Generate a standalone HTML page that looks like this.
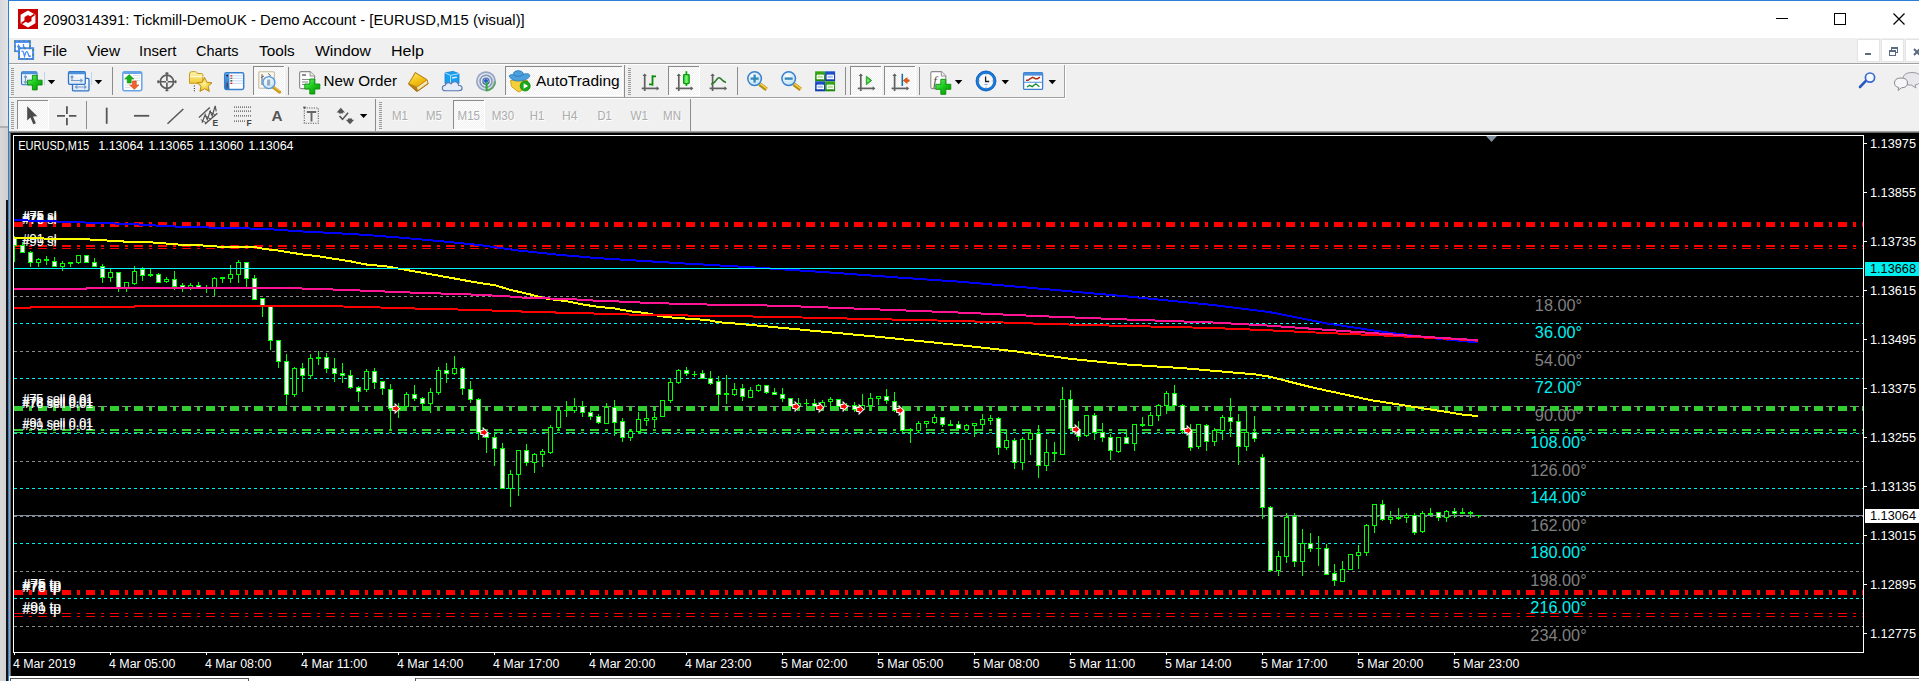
<!DOCTYPE html><html><head><meta charset="utf-8"><title>EURUSD,M15</title><style>
html,body{margin:0;padding:0}
body{width:1919px;height:681px;overflow:hidden;position:relative;background:#fff;font-family:"Liberation Sans",sans-serif;}
.abs{position:absolute}
.t{position:absolute;white-space:pre;line-height:1;transform-origin:0 0}
.menu{font-size:15px;color:#000;top:43px}
.tf{font-size:12px;color:#a0a0a0;top:110px;text-shadow:1px 1px 0 #fff}
.sep{position:absolute;width:1px;background:#a0a0a0;box-shadow:1px 0 0 #fff}
.grip{position:absolute;width:3px;background:repeating-linear-gradient(#a0a0a0 0 1px,transparent 1px 3px)}
.pressed{position:absolute;box-sizing:border-box;border:1px solid #a0a0a0;border-right-color:#fff;border-bottom-color:#fff;background:
 repeating-conic-gradient(#fff 0 25%,#f0f0f0 0 50%) 0 0/2px 2px}
svg{position:absolute;overflow:visible}
</style></head><body>
<div class="abs" style="left:0;top:0;width:8px;height:681px;background:linear-gradient(90deg,#d6d8db,#e4e4e6)"></div>
<div class="abs" style="left:0;top:127px;width:8px;height:554px;background:linear-gradient(90deg,#d8d8d8,#cfcfcf)"></div>
<div class="abs" style="left:0;top:126px;width:8px;height:2px;background:#b0b0b0"></div>
<div class="abs" style="left:6px;top:200px;width:2px;height:481px;background:#10141c"></div>
<div class="abs" style="left:8px;top:0;width:1px;height:681px;background:#2b80d6"></div>
<div class="abs" style="left:8px;top:0;width:1911px;height:1px;background:#2b80d6"></div>
<div class="abs" style="left:9px;top:1px;width:1910px;height:37px;background:#fff"></div>
<div class="abs" style="left:9px;top:38px;width:1910px;height:94px;background:#f0f0f0"></div>
<div class="abs" style="left:9px;top:63px;width:1910px;height:1px;background:#a0a0a0"></div>
<div class="abs" style="left:9px;top:64px;width:1910px;height:1px;background:#fff"></div>
<div class="abs" style="left:9px;top:97px;width:1056px;height:1px;background:#a0a0a0"></div>
<div class="abs" style="left:9px;top:98px;width:1057px;height:1px;background:#fff"></div>
<div class="abs" style="left:1064px;top:65px;width:1px;height:33px;background:#a0a0a0"></div>
<div class="abs" style="left:1065px;top:65px;width:1px;height:33px;background:#fff"></div>
<svg style="left:18px;top:9px" width="20" height="20" viewBox="0 0 20 20"><rect width="20" height="20" fill="#c80000"/><polygon points="10,1.5 17.4,5.8 17.4,14.2 10,18.5 2.6,14.2 2.6,5.8" fill="#fff"/><polygon points="10,6 13.5,8 13.5,12 10,14 6.5,12 6.5,8" fill="#c80000"/><path d="M3.5 14.5 L8 11.5 M12 8.5 L16.5 5.5" stroke="#c80000" stroke-width="1.6"/></svg>
<div class="t" id="title" style="left:43px;top:12px;font-size:15px;color:#000;transform:scaleX(0.986)">2090314391: Tickmill-DemoUK - Demo Account - [EURUSD,M15 (visual)]</div>
<svg style="left:1770px;top:8px" width="149" height="24" viewBox="1770 8 149 24" shape-rendering="crispEdges"><rect x="1776" y="18" width="12" height="1" fill="#000"/><rect x="1834.5" y="13.5" width="11" height="11" fill="none" stroke="#000"/><path d="M1893.5 13.5 L1904.5 24.5 M1904.5 13.5 L1893.5 24.5" stroke="#000" stroke-width="1.2" shape-rendering="auto"/></svg>
<div class="t menu" style="left:42.6px;transform:scaleX(1.0012)">File</div>
<div class="t menu" style="left:86.6px;transform:scaleX(1.0233)">View</div>
<div class="t menu" style="left:139.3px;transform:scaleX(0.9941)">Insert</div>
<div class="t menu" style="left:196px;transform:scaleX(0.9640)">Charts</div>
<div class="t menu" style="left:258.6px;transform:scaleX(1.0220)">Tools</div>
<div class="t menu" style="left:314.8px;transform:scaleX(1.0495)">Window</div>
<div class="t menu" style="left:390.5px;transform:scaleX(1.0693)">Help</div>
<svg style="left:0;top:0" width="60" height="64" viewBox="0 0 60 64"><rect x="15" y="41.2" width="15" height="10" fill="#fff" stroke="#4a8aff" stroke-width="1.8"/><rect x="14.1" y="40.3" width="16.8" height="2.6" fill="#4a8aff"/><path d="M14.1 41.2 H31 M30 41 V52 M15 41 V52" stroke="#4e8a78" stroke-width="1.8" stroke-dasharray="1.6 3" fill="none"/><path d="M18.500 44.500 v4 M17 46.500 h3 M23.500 44 v4 l1.500 -1" stroke="#4a8aff" stroke-width="1.300" fill="none"/><rect x="19" y="48.200" width="14.100" height="10.800" fill="#fff" stroke="#4a8aff" stroke-width="2"/><path d="M19 48.200 H33.100 V59 H19 Z" stroke="#4e8a78" stroke-width="2" stroke-dasharray="1.600 3.400" fill="none"/><path d="M21.500 51.500 q1.500 -1 2 1 l1 4 l1.200 -4 q1 -2 2 0 l1.200 4.200" stroke="#4a8aff" stroke-width="1.200" fill="none"/><rect x="29" y="55.300" width="1.800" height="1.800" fill="#4a8aff"/></svg>
<div class="abs" style="left:1857px;top:39px;width:23px;height:23px;background:#fff;border:1px solid #e4e4e4;box-sizing:border-box"></div>
<div class="abs" style="left:1881px;top:39px;width:23px;height:23px;background:#fff;border:1px solid #e4e4e4;box-sizing:border-box"></div>
<div class="abs" style="left:1905px;top:39px;width:23px;height:23px;background:#fff;border:1px solid #e4e4e4;box-sizing:border-box"></div>
<div class="abs" style="left:1865px;top:53px;width:6px;height:2px;background:#5a6a80"></div>
<svg style="left:1888.5px;top:46.5px" width="10" height="10" viewBox="0 0 10 10" shape-rendering="crispEdges"><rect x="2.5" y="0.5" width="6" height="5" fill="none" stroke="#5a6a80"/><rect x="2" y="0" width="7" height="2" fill="#5a6a80"/><rect x="0.5" y="3.5" width="6" height="5" fill="#fff" stroke="#5a6a80"/><rect x="0" y="3" width="7" height="2" fill="#5a6a80"/></svg>
<svg style="left:1912.5px;top:47.5px" width="8" height="8" viewBox="0 0 8 8"><path d="M1 1 L7 7 M7 1 L1 7" stroke="#5a6a80" stroke-width="2"/></svg>
<svg style="left:0;top:0" width="1919" height="133" viewBox="0 0 1919 133" font-family="Liberation Sans, sans-serif">
<defs>
<pattern id="dith" width="2" height="2" patternUnits="userSpaceOnUse"><rect width="2" height="2" fill="#f0f0f0"/><rect width="1" height="1" fill="#fff"/><rect x="1" y="1" width="1" height="1" fill="#fff"/></pattern>
<linearGradient id="gplus" x1="0" y1="0" x2="1" y2="1"><stop offset="0" stop-color="#7cf07c"/><stop offset="0.5" stop-color="#18c818"/><stop offset="1" stop-color="#0a8a0a"/></linearGradient>
<linearGradient id="gwin" x1="0" y1="0" x2="0" y2="1"><stop offset="0" stop-color="#ffffff"/><stop offset="1" stop-color="#dce8f8"/></linearGradient>
<linearGradient id="ggold" x1="0" y1="0" x2="1" y2="1"><stop offset="0" stop-color="#ffe060"/><stop offset="0.5" stop-color="#e8b010"/><stop offset="1" stop-color="#a86c08"/></linearGradient>
<linearGradient id="gfold" x1="0" y1="0" x2="0" y2="1"><stop offset="0" stop-color="#fff6b0"/><stop offset="1" stop-color="#f0c830"/></linearGradient>
<radialGradient id="glens" cx="0.4" cy="0.35" r="0.7"><stop offset="0" stop-color="#ffffff"/><stop offset="1" stop-color="#b8e0f4"/></radialGradient>
<linearGradient id="gblue" x1="0" y1="0" x2="0" y2="1"><stop offset="0" stop-color="#58a0e8"/><stop offset="1" stop-color="#2a6cc0"/></linearGradient>
<linearGradient id="ggr" x1="0" y1="0" x2="0" y2="1"><stop offset="0" stop-color="#38a818"/><stop offset="1" stop-color="#1c8808"/></linearGradient>
<linearGradient id="gbl" x1="0" y1="0" x2="0" y2="1"><stop offset="0" stop-color="#2050d0"/><stop offset="1" stop-color="#1038a8"/></linearGradient>
<linearGradient id="gcandle" x1="0" y1="0" x2="1" y2="0"><stop offset="0" stop-color="#20c820"/><stop offset="0.5" stop-color="#80f880"/><stop offset="1" stop-color="#20c820"/></linearGradient>
<radialGradient id="gstar" cx="0.45" cy="0.45" r="0.6"><stop offset="0" stop-color="#fff4a0"/><stop offset="0.6" stop-color="#f4d040"/><stop offset="1" stop-color="#d8a010"/></radialGradient>
<linearGradient id="ggold2" x1="0.2" y1="0" x2="0.8" y2="1"><stop offset="0" stop-color="#ffe870"/><stop offset="0.5" stop-color="#f4c418"/><stop offset="1" stop-color="#e0a008"/></linearGradient>
<radialGradient id="gsig" cx="0.45" cy="0.45" r="0.6"><stop offset="0" stop-color="#ffffff" stop-opacity="0.1"/><stop offset="0.7" stop-color="#a0b0c8" stop-opacity="0.35"/><stop offset="1" stop-color="#7088a8" stop-opacity="0.55"/></radialGradient>
</defs>
<rect x="11" y="68" width="3" height="1" fill="#9a9a9a" shape-rendering="crispEdges"/>
<rect x="11" y="70" width="3" height="1" fill="#9a9a9a" shape-rendering="crispEdges"/>
<rect x="11" y="72" width="3" height="1" fill="#9a9a9a" shape-rendering="crispEdges"/>
<rect x="11" y="74" width="3" height="1" fill="#9a9a9a" shape-rendering="crispEdges"/>
<rect x="11" y="76" width="3" height="1" fill="#9a9a9a" shape-rendering="crispEdges"/>
<rect x="11" y="78" width="3" height="1" fill="#9a9a9a" shape-rendering="crispEdges"/>
<rect x="11" y="80" width="3" height="1" fill="#9a9a9a" shape-rendering="crispEdges"/>
<rect x="11" y="82" width="3" height="1" fill="#9a9a9a" shape-rendering="crispEdges"/>
<rect x="11" y="84" width="3" height="1" fill="#9a9a9a" shape-rendering="crispEdges"/>
<rect x="11" y="86" width="3" height="1" fill="#9a9a9a" shape-rendering="crispEdges"/>
<rect x="11" y="88" width="3" height="1" fill="#9a9a9a" shape-rendering="crispEdges"/>
<rect x="11" y="90" width="3" height="1" fill="#9a9a9a" shape-rendering="crispEdges"/>
<rect x="11" y="92" width="3" height="1" fill="#9a9a9a" shape-rendering="crispEdges"/>
<rect x="11" y="94" width="3" height="1" fill="#9a9a9a" shape-rendering="crispEdges"/>
<rect x="21.5" y="71.7" width="15.5" height="13" rx="1.2" fill="url(#gwin)" stroke="#2f74c8" stroke-width="1.1"/><rect x="21.5" y="71.7" width="15.5" height="2.6" rx="1" fill="#4a90dc"/>
<path d="M25.5 76 v7 M24 77.6 l1.5 -1.8 l1.5 1.8 M24 81.4 l1.5 1.8 l1.5 -1.8" stroke="#7a9cc0" stroke-width="1.2" fill="none"/>
<path d="M32.4 75.3 h4.8 v4.9 h4.9 v4.8 h-4.9 v4.9 h-4.8 v-4.9 h-4.9 v-4.8 h4.9 z" fill="url(#gplus)" stroke="#0a8c0a" stroke-width="0.9" stroke-linejoin="round"/>
<rect x="44" y="72" width="1" height="13" fill="#bcd4ee"/>
<polygon points="47.8,80 55.199999999999996,80 51.5,84.2" fill="#000"/>
<rect x="72.5" y="78.3" width="16.5" height="12.6" rx="1.2" fill="url(#gwin)" stroke="#2f74c8" stroke-width="1.3"/>
<path d="M75.5 87 h10.5 M77.3 85.5 l-1.8 1.5 l1.8 1.5 M84.2 85.5 l1.8 1.5 l-1.8 1.5" stroke="#7a9cc0" stroke-width="1.2" fill="none"/>
<rect x="68.5" y="71.7" width="16.8" height="12.6" rx="1.2" fill="url(#gwin)" stroke="#2f74c8" stroke-width="1.3"/><rect x="68.5" y="71.7" width="16.8" height="2.6" rx="1" fill="#4a90dc"/>
<path d="M72 76 v5 M70.6 77.5 l1.4 -1.6 l1.4 1.6 M71 80.5 h11 M80.4 79 l1.8 1.5 l-1.8 1.5" stroke="#7a9cc0" stroke-width="1.2" fill="none"/>
<rect x="91" y="72" width="1" height="13" fill="#bcd4ee"/>
<polygon points="94.7,80 102.10000000000001,80 98.4,84.2" fill="#000"/>
<rect x="112" y="67" width="1" height="28" fill="#8c8c8c" shape-rendering="crispEdges"/>
<rect x="122.8" y="71.8" width="19" height="19" rx="2" fill="#fff" stroke="#68a4e8" stroke-width="1.5"/><rect x="123" y="71.600" width="18.600" height="2.400" rx="1" fill="#68a4e8"/>
<path d="M133 75.5 h7 M133 78 h7 M125 85 h5 M125 87.5 h5 M134 80.5 h6" stroke="#dcdcdc" stroke-width="1"/>
<path d="M129.2 74.6 l4.6 4.4 h-2.6 v4 h-4 v-4 h-2.6 z" fill="#18b018" stroke="#0c900c" stroke-width="0.6"/>
<path d="M134.3 89.4 l-4.6 -4.4 h2.6 v-4 h4 v4 h2.6 z" fill="#f06030" stroke="#d84818" stroke-width="0.6"/>
<g stroke="#5c5c5c" fill="none"><circle cx="166.9" cy="81.8" r="6.6" stroke-width="1.7"/><path d="M166.9 72.6 V91 M157.5 81.8 H176.3" stroke-width="1.6"/><path d="M165.400 73.300 h3 M165.400 90.400 h3 M158.200 80.300 v3 M175.600 80.300 v3" stroke-width="1.500"/></g><circle cx="166.9" cy="81.8" r="1" fill="#f0f0f0"/>
<path d="M189.5 74 q0 -2.3 2.3 -2.3 h3.6 q1.6 0 2 1.8 h4.2 q1.2 0 1.2 1.2 v8.6 h-13.3 z" fill="url(#gfold)" stroke="#c89a20" stroke-width="1"/><path d="M190 76.5 h12.5" stroke="#fffbe0" stroke-width="1.2"/>
<path d="M194.4 85.5 v6" stroke="#303030" stroke-width="1.1" stroke-dasharray="1 1.4"/>
<polygon points="204.6,77.4 206.9,82.2 212,82.8 208.2,86.3 209.3,91.4 204.6,88.8 199.9,91.4 201,86.3 197.2,82.8 202.3,82.2" fill="url(#gstar)" stroke="#b8860c" stroke-width="0.9" stroke-linejoin="round"/>
<rect x="224.7" y="72.8" width="19" height="16.6" rx="1.6" fill="#fff" stroke="#3a80d0" stroke-width="1.5"/><rect x="225" y="73" width="4.4" height="16.2" fill="url(#gblue)"/>
<path d="M231 75.8 h12 M231 78.3 h12 M231 80.8 h12 M231 83.3 h12" stroke="#c4d8f8" stroke-width="1"/><rect x="230.3" y="75.2" width="2" height="1.3" fill="#f02020"/><rect x="230.3" y="77.7" width="2" height="1.3" fill="#508050"/><rect x="230.3" y="80.2" width="2" height="1.3" fill="#205020"/><rect x="230.3" y="82.7" width="2" height="1.3" fill="#f02020"/><circle cx="227.2" cy="75.6" r="0.9" fill="#101010"/><rect x="226.6" y="82.5" width="1.3" height="5" fill="#404858"/>
<g shape-rendering="crispEdges"><rect x="253" y="66" width="32" height="30" fill="url(#dith)"/><rect x="253" y="66" width="32" height="1" fill="#8a8a8a"/><rect x="253" y="66" width="1" height="30" fill="#8a8a8a"/><rect x="253" y="95" width="32" height="1" fill="#fff"/><rect x="284" y="66" width="1" height="30" fill="#fff"/></g>
<rect x="258.8" y="71.7" width="15.6" height="16.6" rx="1" fill="#faf8f0" stroke="#c4bc9c" stroke-width="1.1"/><path d="M262 74 v11 M261 77.5 l3 -1.5 M268 73.5 l2.5 2 l-2 1.5" stroke="#606060" stroke-width="1" fill="none"/>
<path d="M273 87 l6.6 5" stroke="#c89818" stroke-width="3.2" stroke-linecap="round"/><path d="M273.4 86.4 l6.4 4.8" stroke="#f0d050" stroke-width="1" stroke-linecap="round"/>
<circle cx="268.9" cy="82.6" r="6" fill="url(#glens)" fill-opacity="0.92" stroke="#5c98dc" stroke-width="1.4"/><rect x="267" y="79.5" width="3.2" height="6" fill="#8098b0" opacity="0.8"/>
<rect x="288" y="67" width="1" height="28" fill="#8c8c8c" shape-rendering="crispEdges"/>
<path d="M301.1 71.6 h9 l4.5 4.5 v11 q0 1.5 -1.5 1.5 h-12 q-1.5 0 -1.5 -1.5 v-14 q0 -1.5 1.5 -1.5 z" fill="#fdfdfd" stroke="#8a8a8a" stroke-width="1.1"/><path d="M310.1 71.6 v4.5 h4.5" fill="#e8e8e8" stroke="#8a8a8a" stroke-width="0.9"/>
<path d="M302 75 h4 " stroke="#707070" stroke-width="1.6"/><path d="M302 79.5 h9 M302 82 h6 M302 84.5 h6" stroke="#8a8a8a" stroke-width="1.1"/>
<path d="M309.8 79 h5 v5.0 h5.0 v5 h-5.0 v5.0 h-5 v-5.0 h-5.0 v-5 h5.0 z" fill="url(#gplus)" stroke="#0a8c0a" stroke-width="0.9" stroke-linejoin="round"/>
<text x="323.6" y="85.5" font-size="15" fill="#000" textLength="73.5" lengthAdjust="spacingAndGlyphs">New Order</text>
<path d="M408.400 84 l5 -8 l1.800 -3.500 l11.800 7.200 l1.200 4 l-10.400 7.400 q-.8 .4 -1.600 0 z" fill="#b87c10" stroke="#a06808" stroke-width="0.9" stroke-linejoin="round"/>
<path d="M417 87.200 l9.800 -7 l.9 3 l-9.900 7 z" fill="#f4e6b0"/>
<path d="M415.200 72.800 l11.600 7 l-9.800 7.200 l-8.200 -3.600 l4.800 -7.400 z" fill="url(#ggold2)" stroke="#c08a10" stroke-width="0.7" stroke-linejoin="round"/>
<path d="M445 72.8 l8 -1.4 l6 2.2 v10 h-14 z" fill="#18a0f0" stroke="#1080d8" stroke-width="0.8"/><path d="M445 72.8 l5.5 2.6 v9 M450.5 75.4 l8.5 -1.8" stroke="#bfe4ff" stroke-width="0.9" fill="none"/><rect x="452" y="77" width="5" height="1.4" fill="#d8f0ff" transform="rotate(-10 454 78)"/>
<path d="M445.5 90.8 q-3.2 0 -3.2 -2.8 q0 -2.6 3 -2.8 q.4 -2.6 3.2 -2.6 q1.6 0 2.6 1.2 q1.2 -2 3.6 -2 q3.4 0 3.8 3.4 q3.6 .2 3.6 2.9 q0 2.7 -3.2 2.7 z" fill="#e6ecf6" stroke="#5676b4" stroke-width="1.1"/>
<circle cx="486" cy="81.300" r="9.800" fill="url(#gsig)"/><g fill="none"><circle cx="486" cy="81.3" r="9.2" stroke="#8a9cc0" stroke-width="1.6" opacity="0.85"/><circle cx="486" cy="81.3" r="6" stroke="#7088b8" stroke-width="1.5" opacity="0.85"/><circle cx="486" cy="81.3" r="3.1" stroke="#5070b0" stroke-width="1.3"/><path d="M486 90.6 a9.2 9.2 0 0 0 9 -9" stroke="#50a050" stroke-width="2" opacity="0.8"/></g><circle cx="486" cy="81" r="2" fill="#2050d0"/><path d="M486.6 81.5 V91" stroke="#28b028" stroke-width="2"/>
<g shape-rendering="crispEdges"><rect x="505" y="66" width="118" height="30" fill="url(#dith)"/><rect x="505" y="66" width="118" height="1" fill="#8a8a8a"/><rect x="505" y="66" width="1" height="30" fill="#8a8a8a"/><rect x="505" y="95" width="118" height="1" fill="#fff"/><rect x="622" y="66" width="1" height="30" fill="#fff"/></g>
<path d="M510.5 80.5 l17 0 l-1 6.5 l-6.5 4.6 q-1 .5 -2 0 l-6.5 -5 z" fill="#f4d038" stroke="#c89a18" stroke-width="0.9"/>
<path d="M509.4 77 q-.6 -2.6 3.4 -2.4 q1 -4 5.4 -4 q4 0 5.6 3.4 q5.8 -1.2 6 1.6 q-.2 3.4 -8.4 5.2 q-8 1.4 -12 -3.8 z" fill="#4aa0dc" stroke="#2c78b8" stroke-width="0.8"/><path d="M513.5 75 q4.5 2.8 10.5 -.6" stroke="#2c78b8" stroke-width="0.9" fill="none"/>
<circle cx="525.2" cy="86" r="5" fill="#18a818" stroke="#0c8a0c" stroke-width="0.8"/><polygon points="523.6,83.2 523.6,88.8 528.2,86" fill="#fff"/>
<text x="536" y="85.5" font-size="15" fill="#000" textLength="83.6" lengthAdjust="spacingAndGlyphs">AutoTrading</text>
<rect x="624" y="65" width="1" height="32" fill="#8c8c8c" shape-rendering="crispEdges"/>
<rect x="628" y="68" width="3" height="1" fill="#9a9a9a" shape-rendering="crispEdges"/>
<rect x="628" y="70" width="3" height="1" fill="#9a9a9a" shape-rendering="crispEdges"/>
<rect x="628" y="72" width="3" height="1" fill="#9a9a9a" shape-rendering="crispEdges"/>
<rect x="628" y="74" width="3" height="1" fill="#9a9a9a" shape-rendering="crispEdges"/>
<rect x="628" y="76" width="3" height="1" fill="#9a9a9a" shape-rendering="crispEdges"/>
<rect x="628" y="78" width="3" height="1" fill="#9a9a9a" shape-rendering="crispEdges"/>
<rect x="628" y="80" width="3" height="1" fill="#9a9a9a" shape-rendering="crispEdges"/>
<rect x="628" y="82" width="3" height="1" fill="#9a9a9a" shape-rendering="crispEdges"/>
<rect x="628" y="84" width="3" height="1" fill="#9a9a9a" shape-rendering="crispEdges"/>
<rect x="628" y="86" width="3" height="1" fill="#9a9a9a" shape-rendering="crispEdges"/>
<rect x="628" y="88" width="3" height="1" fill="#9a9a9a" shape-rendering="crispEdges"/>
<rect x="628" y="90" width="3" height="1" fill="#9a9a9a" shape-rendering="crispEdges"/>
<rect x="628" y="92" width="3" height="1" fill="#9a9a9a" shape-rendering="crispEdges"/>
<rect x="628" y="94" width="3" height="1" fill="#9a9a9a" shape-rendering="crispEdges"/>
<g stroke="#606060" stroke-width="1.7" fill="#606060"><path d="M644.7 74.5 V91"/><path d="M641.7 88.4 H658.2"/><polygon points="642.5,76.1 646.9000000000001,76.1 644.7,73.5" stroke="none"/><polygon points="656.6,86.2 656.6,90.60000000000001 659.2,88.4" stroke="none"/></g>
<path d="M652.5 75.2 V85.8 M652.5 76.4 H656 M649 84.4 H652.5" stroke="#0a8c0a" stroke-width="1.8" fill="none"/>
<g shape-rendering="crispEdges"><rect x="668" y="66" width="32" height="30" fill="url(#dith)"/><rect x="668" y="66" width="32" height="1" fill="#8a8a8a"/><rect x="668" y="66" width="1" height="30" fill="#8a8a8a"/><rect x="668" y="95" width="32" height="1" fill="#fff"/><rect x="699" y="66" width="1" height="30" fill="#fff"/></g>
<g stroke="#606060" stroke-width="1.7" fill="#606060"><path d="M678.8 74.5 V91"/><path d="M675.8 88.4 H692.3"/><polygon points="676.5999999999999,76.1 681.0,76.1 678.8,73.5" stroke="none"/><polygon points="690.6999999999999,86.2 690.6999999999999,90.60000000000001 693.3,88.4" stroke="none"/></g>
<path d="M686.4 71.2 V86" stroke="#0a9a0a" stroke-width="1.7"/><rect x="683.6" y="74.6" width="5.6" height="9" rx="0.8" fill="url(#gcandle)" stroke="#0a9a0a" stroke-width="1.2"/>
<g stroke="#606060" stroke-width="1.7" fill="#606060"><path d="M712.6 74.5 V91"/><path d="M709.6 88.4 H726.1"/><polygon points="710.4,76.1 714.8000000000001,76.1 712.6,73.5" stroke="none"/><polygon points="724.5,86.2 724.5,90.60000000000001 727.1,88.4" stroke="none"/></g>
<path d="M711.2 84.4 q4 -2 6 -5.5 q1.6 -2.2 3.4 -.4 q2.6 3.2 5.4 4" stroke="#2a7a2a" stroke-width="1.6" fill="none"/>
<rect x="737" y="67" width="1" height="28" fill="#8c8c8c" shape-rendering="crispEdges"/>
<path d="M759.6 84.19999999999999 l7 5.2" stroke="#b88a10" stroke-width="4" stroke-linecap="butt"/><path d="M760.0 83.6 l7 5.2" stroke="#f0d048" stroke-width="1.6"/>
<circle cx="754.6" cy="78.6" r="6.8" fill="url(#glens)" stroke="#3a80cc" stroke-width="1.5"/>
<path d="M750.6 78.6 h8" stroke="#3a88b8" stroke-width="2.4"/>
<path d="M754.6 74.6 v8" stroke="#3a88b8" stroke-width="2.4"/>
<path d="M793.7 84.19999999999999 l7 5.2" stroke="#b88a10" stroke-width="4" stroke-linecap="butt"/><path d="M794.1 83.6 l7 5.2" stroke="#f0d048" stroke-width="1.6"/>
<circle cx="788.7" cy="78.6" r="6.8" fill="url(#glens)" stroke="#3a80cc" stroke-width="1.5"/>
<path d="M784.7 78.6 h8" stroke="#3a88b8" stroke-width="2.4"/>
<rect x="815.1" y="71.3" width="10" height="10" fill="url(#ggr)"/><path d="M817.1 79.3 v-4.2 h6.4 v4.2 M817.1 78.3 h6.4" fill="#fff" stroke="#fff" stroke-width="1"/><rect x="817.7" y="75.7" width="5.2" height="2.2" fill="#b8e0a0"/>
<rect x="825.1" y="71.3" width="10" height="10" fill="url(#gbl)"/><path d="M827.1 79.3 v-4.2 h6.4 v4.2 M827.1 78.3 h6.4" fill="#fff" stroke="#fff" stroke-width="1"/><rect x="827.7" y="75.7" width="5.2" height="2.2" fill="#a8c0f0"/>
<rect x="815.1" y="81.3" width="10" height="10" fill="url(#gbl)"/><path d="M817.1 89.3 v-4.2 h6.4 v4.2 M817.1 88.3 h6.4" fill="#fff" stroke="#fff" stroke-width="1"/><rect x="817.7" y="85.7" width="5.2" height="2.2" fill="#a8c0f0"/>
<rect x="825.1" y="81.3" width="10" height="10" fill="url(#ggr)"/><path d="M827.1 89.3 v-4.2 h6.4 v4.2 M827.1 88.3 h6.4" fill="#fff" stroke="#fff" stroke-width="1"/><rect x="827.7" y="85.7" width="5.2" height="2.2" fill="#b8e0a0"/>
<rect x="845" y="67" width="1" height="28" fill="#8c8c8c" shape-rendering="crispEdges"/>
<g shape-rendering="crispEdges"><rect x="850" y="66" width="32" height="30" fill="url(#dith)"/><rect x="850" y="66" width="32" height="1" fill="#8a8a8a"/><rect x="850" y="66" width="1" height="30" fill="#8a8a8a"/><rect x="850" y="95" width="32" height="1" fill="#fff"/><rect x="881" y="66" width="1" height="30" fill="#fff"/></g>
<g stroke="#606060" stroke-width="1.7" fill="#606060"><path d="M860.8 74.5 V91"/><path d="M857.8 88.4 H874.3"/><polygon points="858.5999999999999,76.1 863.0,76.1 860.8,73.5" stroke="none"/><polygon points="872.6999999999999,86.2 872.6999999999999,90.60000000000001 875.3,88.4" stroke="none"/></g>
<polygon points="866.3,76.2 866.3,84.8 871.8,80.5" fill="#30b830" stroke="#18a018" stroke-width="0.8"/><polygon points="867.4,78.6 867.4,82.4 869.8,80.5" fill="#90e890"/>
<g shape-rendering="crispEdges"><rect x="884" y="66" width="32" height="30" fill="url(#dith)"/><rect x="884" y="66" width="32" height="1" fill="#8a8a8a"/><rect x="884" y="66" width="1" height="30" fill="#8a8a8a"/><rect x="884" y="95" width="32" height="1" fill="#fff"/><rect x="915" y="66" width="1" height="30" fill="#fff"/></g>
<g stroke="#606060" stroke-width="1.7" fill="#606060"><path d="M894.6 74.5 V91"/><path d="M891.6 88.4 H908.1"/><polygon points="892.4,76.1 896.8000000000001,76.1 894.6,73.5" stroke="none"/><polygon points="906.5,86.2 906.5,90.60000000000001 909.1,88.4" stroke="none"/></g>
<path d="M902.3 73.8 V86" stroke="#1a70a8" stroke-width="1.6"/><path d="M903.2 80.6 l4 -3 v2.2 h2 v1.6 h-2 v2.2 z" fill="#e85810" stroke="#c04000" stroke-width="0.5"/>
<rect x="919" y="67" width="1" height="28" fill="#8c8c8c" shape-rendering="crispEdges"/>
<path d="M932.3 71.6 h9 l4.5 4.5 v11 q0 1.5 -1.5 1.5 h-12 q-1.5 0 -1.5 -1.5 v-14 q0 -1.5 1.5 -1.5 z" fill="#fdfdfd" stroke="#8a8a8a" stroke-width="1.1"/><path d="M941.3 71.6 v4.5 h4.5" fill="#e8e8e8" stroke="#8a8a8a" stroke-width="0.9"/>
<text x="933.2" y="85" font-size="13" font-style="italic" font-family="Liberation Serif, serif" fill="#505040">f</text>
<path d="M940.8 79.3 h5 v5.0 h5.0 v5 h-5.0 v5.0 h-5 v-5.0 h-5.0 v-5 h5.0 z" fill="url(#gplus)" stroke="#0a8c0a" stroke-width="0.9" stroke-linejoin="round"/>
<polygon points="954.9,80 962.3,80 958.6,84.2" fill="#000"/>
<circle cx="986" cy="81" r="8.7" fill="#f8f8f8" stroke="#1a78d8" stroke-width="2.9"/><circle cx="986" cy="81" r="10" fill="none" stroke="#0c58b0" stroke-width="0.7"/><path d="M985.6 76.5 v5 h3.6" stroke="#202020" stroke-width="1.3" fill="none"/><path d="M986 74.2 v1 M986 86.8 v1 M979.2 81 h1 M991.8 81 h1" stroke="#909090" stroke-width="0.9"/><path d="M984.5 84.5 h3" stroke="#58a0f0" stroke-width="0.9"/>
<polygon points="1001.6,80 1009.0,80 1005.3000000000001,84.2" fill="#000"/>
<rect x="1023.6" y="72.6" width="19" height="16.8" rx="1" fill="#fff" stroke="#3a80d0" stroke-width="1.3"/><rect x="1023.6" y="72.6" width="19" height="3" fill="#4a90dc"/><path d="M1024 82.3 h18.4" stroke="#6aa0e0" stroke-width="1.2"/>
<path d="M1026 80.3 l2 0 l2.4 -1.6 l2.4 -1.4 l2.6 1.4 l2.2 0 l2.4 -1.6" stroke="#b02810" stroke-width="1.4" fill="none"/><path d="M1027 87 l2.6 -1.6 l2.6 1.2 l3.6 -2.8 l3.6 3" stroke="#189030" stroke-width="1.4" fill="none"/>
<polygon points="1048.6,80 1056.0,80 1052.3,84.2" fill="#000"/>
<path d="M1860 87 l5.6 -5.8" stroke="#2858c0" stroke-width="2.6" stroke-linecap="round"/><circle cx="1870" cy="77.6" r="4.6" fill="#f4f8ff" stroke="#3868d0" stroke-width="1.7"/>
<path d="M1903 79 q0 -6.5 9 -6.5 q9 0 9 6.5 q0 5 -6 6 l1 3 l-4.5 -2.8 q-8.500 0 -8.500 -6.200 z" fill="#e8e8ec" stroke="#9a9aa0" stroke-width="1"/><path d="M1894.500 83 q0 -5 6.500 -5 q6.500 0 6.500 5 q0 4.600 -6 4.800 l-3.400 2.600 l.6 -2.900 q-4.200 -.9 -4.200 -4.500 z" fill="#f6f6f8" stroke="#8a8a90" stroke-width="1"/>
<rect x="11" y="102" width="3" height="1" fill="#9a9a9a" shape-rendering="crispEdges"/>
<rect x="11" y="104" width="3" height="1" fill="#9a9a9a" shape-rendering="crispEdges"/>
<rect x="11" y="106" width="3" height="1" fill="#9a9a9a" shape-rendering="crispEdges"/>
<rect x="11" y="108" width="3" height="1" fill="#9a9a9a" shape-rendering="crispEdges"/>
<rect x="11" y="110" width="3" height="1" fill="#9a9a9a" shape-rendering="crispEdges"/>
<rect x="11" y="112" width="3" height="1" fill="#9a9a9a" shape-rendering="crispEdges"/>
<rect x="11" y="114" width="3" height="1" fill="#9a9a9a" shape-rendering="crispEdges"/>
<rect x="11" y="116" width="3" height="1" fill="#9a9a9a" shape-rendering="crispEdges"/>
<rect x="11" y="118" width="3" height="1" fill="#9a9a9a" shape-rendering="crispEdges"/>
<rect x="11" y="120" width="3" height="1" fill="#9a9a9a" shape-rendering="crispEdges"/>
<rect x="11" y="122" width="3" height="1" fill="#9a9a9a" shape-rendering="crispEdges"/>
<rect x="11" y="124" width="3" height="1" fill="#9a9a9a" shape-rendering="crispEdges"/>
<rect x="11" y="126" width="3" height="1" fill="#9a9a9a" shape-rendering="crispEdges"/>
<rect x="11" y="128" width="3" height="1" fill="#9a9a9a" shape-rendering="crispEdges"/>
<g shape-rendering="crispEdges"><rect x="17" y="100" width="32" height="30" fill="url(#dith)"/><rect x="17" y="100" width="32" height="1" fill="#8a8a8a"/><rect x="17" y="100" width="1" height="30" fill="#8a8a8a"/><rect x="17" y="129" width="32" height="1" fill="#fff"/><rect x="48" y="100" width="1" height="30" fill="#fff"/></g>
<path d="M27.2 106.2 V120.4 L30.4 117.6 L33.3 124.3 L35.9 123.2 L33 116.6 L37.3 116.2 Z" fill="#4a4a4a"/>
<g stroke="#555" stroke-width="1.8"><path d="M57 115.9 H65 M69 115.9 H76.4 M66.9 106.3 V114 M66.9 118 V125.2"/></g>
<rect x="86" y="101" width="1" height="28" fill="#8c8c8c" shape-rendering="crispEdges"/>
<g stroke="#555" stroke-width="1.8" fill="none"><path d="M106.7 107.7 V123.8"/><path d="M134 115.8 H149.2"/><path d="M167.5 123.8 L183.3 109" stroke-width="1.5"/></g>
<g stroke="#555" fill="none"><path d="M199 117.400 L209.800 107.400 M205 124 L217.400 113.200" stroke-width="1.400"/><path d="M202 122.800 L205.200 114.600 L207.200 119.600 L210.200 111.200 L212.200 116 L215.200 105.800 L216.200 111.400" stroke-width="1.200"/><path d="M200.800 119.600 l5.400 3.200 M204.800 115.600 l6 3.600 M209.400 111.400 l5.400 3.200" stroke-width="1"/></g>
<text x="212.6" y="126.4" font-size="8.5" font-weight="bold" fill="#444">E</text>
<path d="M234 107.1 h17.2" stroke="#555" stroke-width="1.3" stroke-dasharray="1 1"/>
<path d="M234 111.1 h17.2" stroke="#555" stroke-width="1.3" stroke-dasharray="1 1"/>
<path d="M234 115.9 h17.2" stroke="#555" stroke-width="1.3" stroke-dasharray="1 1"/>
<path d="M234 121.2 h12" stroke="#555" stroke-width="1.3" stroke-dasharray="1 1"/>
<text x="246.6" y="126.4" font-size="8.5" font-weight="bold" fill="#444">F</text>
<text x="271.4" y="121.3" font-size="15" font-weight="bold" fill="#555" textLength="11" lengthAdjust="spacingAndGlyphs">A</text>
<rect x="304.3" y="108" width="14" height="15.300" fill="none" stroke="#555" stroke-width="1.1" stroke-dasharray="1.1 1.3"/><path d="M306.800 112 h9.400 M311.500 112 v9.500" stroke="#666" stroke-width="1.9"/><rect x="303.300" y="106.600" width="2.400" height="1.600" fill="#555"/>
<path d="M336.600 112.400 L340.800 107.800 L345 112.400 H342.800 V113.600 H338.800 V112.400 Z" fill="#555"/><path d="M345.800 119.800 L350 124.200 L354.200 119.800 H352 V118.600 H348 V119.800 Z" fill="#555"/><path d="M339.500 116 l3 3.400 l5.600 -6.600" stroke="#555" stroke-width="1.6" fill="none"/>
<polygon points="359.9,113.9 367.29999999999995,113.9 363.59999999999997,118.10000000000001" fill="#000"/>
<rect x="375" y="99" width="1" height="32" fill="#8c8c8c" shape-rendering="crispEdges"/>
<rect x="379" y="102" width="3" height="1" fill="#9a9a9a" shape-rendering="crispEdges"/>
<rect x="379" y="104" width="3" height="1" fill="#9a9a9a" shape-rendering="crispEdges"/>
<rect x="379" y="106" width="3" height="1" fill="#9a9a9a" shape-rendering="crispEdges"/>
<rect x="379" y="108" width="3" height="1" fill="#9a9a9a" shape-rendering="crispEdges"/>
<rect x="379" y="110" width="3" height="1" fill="#9a9a9a" shape-rendering="crispEdges"/>
<rect x="379" y="112" width="3" height="1" fill="#9a9a9a" shape-rendering="crispEdges"/>
<rect x="379" y="114" width="3" height="1" fill="#9a9a9a" shape-rendering="crispEdges"/>
<rect x="379" y="116" width="3" height="1" fill="#9a9a9a" shape-rendering="crispEdges"/>
<rect x="379" y="118" width="3" height="1" fill="#9a9a9a" shape-rendering="crispEdges"/>
<rect x="379" y="120" width="3" height="1" fill="#9a9a9a" shape-rendering="crispEdges"/>
<rect x="379" y="122" width="3" height="1" fill="#9a9a9a" shape-rendering="crispEdges"/>
<rect x="379" y="124" width="3" height="1" fill="#9a9a9a" shape-rendering="crispEdges"/>
<rect x="379" y="126" width="3" height="1" fill="#9a9a9a" shape-rendering="crispEdges"/>
<rect x="379" y="128" width="3" height="1" fill="#9a9a9a" shape-rendering="crispEdges"/>
<g shape-rendering="crispEdges"><rect x="453" y="100" width="32" height="30" fill="url(#dith)"/><rect x="453" y="100" width="32" height="1" fill="#8a8a8a"/><rect x="453" y="100" width="1" height="30" fill="#8a8a8a"/><rect x="453" y="129" width="32" height="1" fill="#fff"/><rect x="484" y="100" width="1" height="30" fill="#fff"/></g>
<text x="393" y="120.800" font-size="12" fill="#fff" textLength="16" lengthAdjust="spacingAndGlyphs">M1</text>
<text x="392" y="119.800" font-size="12" fill="#acacac" textLength="16" lengthAdjust="spacingAndGlyphs">M1</text>
<text x="427" y="120.800" font-size="12" fill="#fff" textLength="16" lengthAdjust="spacingAndGlyphs">M5</text>
<text x="426" y="119.800" font-size="12" fill="#acacac" textLength="16" lengthAdjust="spacingAndGlyphs">M5</text>
<text x="458.5" y="120.800" font-size="12" fill="#fff" textLength="22.5" lengthAdjust="spacingAndGlyphs">M15</text>
<text x="457.5" y="119.800" font-size="12" fill="#acacac" textLength="22.5" lengthAdjust="spacingAndGlyphs">M15</text>
<text x="492.7" y="120.800" font-size="12" fill="#fff" textLength="22.5" lengthAdjust="spacingAndGlyphs">M30</text>
<text x="491.7" y="119.800" font-size="12" fill="#acacac" textLength="22.5" lengthAdjust="spacingAndGlyphs">M30</text>
<text x="530.7" y="120.800" font-size="12" fill="#fff" textLength="14.5" lengthAdjust="spacingAndGlyphs">H1</text>
<text x="529.7" y="119.800" font-size="12" fill="#acacac" textLength="14.5" lengthAdjust="spacingAndGlyphs">H1</text>
<text x="563" y="120.800" font-size="12" fill="#fff" textLength="15.5" lengthAdjust="spacingAndGlyphs">H4</text>
<text x="562" y="119.800" font-size="12" fill="#acacac" textLength="15.5" lengthAdjust="spacingAndGlyphs">H4</text>
<text x="598.5" y="120.800" font-size="12" fill="#fff" textLength="14.3" lengthAdjust="spacingAndGlyphs">D1</text>
<text x="597.5" y="119.800" font-size="12" fill="#acacac" textLength="14.3" lengthAdjust="spacingAndGlyphs">D1</text>
<text x="631.6" y="120.800" font-size="12" fill="#fff" textLength="17.5" lengthAdjust="spacingAndGlyphs">W1</text>
<text x="630.6" y="119.800" font-size="12" fill="#acacac" textLength="17.5" lengthAdjust="spacingAndGlyphs">W1</text>
<text x="664" y="120.800" font-size="12" fill="#fff" textLength="18" lengthAdjust="spacingAndGlyphs">MN</text>
<text x="663" y="119.800" font-size="12" fill="#acacac" textLength="18" lengthAdjust="spacingAndGlyphs">MN</text>
<rect x="690" y="99" width="1" height="32" fill="#8c8c8c" shape-rendering="crispEdges"/>
</svg>
<div class="abs" style="left:9px;top:131px;width:1910px;height:1px;background:#a0a0a0"></div>
<div class="abs" style="left:9px;top:132px;width:1910px;height:1px;background:#696969"></div>
<div class="abs" style="left:9px;top:133px;width:1px;height:543px;background:#a0a0a0"></div>
<div class="abs" style="left:10px;top:133px;width:1px;height:543px;background:#696969"></div>
<div class="abs" style="left:11px;top:133px;width:1908px;height:543px;background:#000"></div>
<div class="abs" style="left:9px;top:676px;width:1910px;height:5px;background:#fff"></div>
<div class="abs" style="left:10px;top:678px;width:239px;height:3px;border:1px solid #555;border-bottom:none;box-sizing:border-box;background:#fff"></div>
<div class="abs" style="left:415px;top:678px;width:1504px;height:1px;background:#808080"></div>
<div class="abs" style="left:415px;top:678px;width:1px;height:3px;background:#555"></div>
<svg style="left:0;top:0" width="1919" height="681" viewBox="0 0 1919 681" shape-rendering="crispEdges" font-family="Liberation Sans, sans-serif"><defs><clipPath id="cc"><rect x="14" y="136" width="1849" height="516"/></clipPath></defs><rect x="13.5" y="135.5" width="1850" height="517" fill="none" stroke="#fff"/><g clip-path="url(#cc)"><path d="M14 296.5 H1863" stroke="#8a8a8a" stroke-width="1" stroke-dasharray="3 3"/><path d="M14 323.5 H1863" stroke="#00f0f0" stroke-width="1" stroke-dasharray="3 3"/><path d="M14 351.5 H1863" stroke="#8a8a8a" stroke-width="1" stroke-dasharray="3 3"/><path d="M14 378.5 H1863" stroke="#00f0f0" stroke-width="1" stroke-dasharray="3 3"/><path d="M14 406.5 H1863" stroke="#8a8a8a" stroke-width="1" stroke-dasharray="3 3"/><path d="M14 433.5 H1863" stroke="#00f0f0" stroke-width="1" stroke-dasharray="3 3"/><path d="M14 461.5 H1863" stroke="#8a8a8a" stroke-width="1" stroke-dasharray="3 3"/><path d="M14 488.5 H1863" stroke="#00f0f0" stroke-width="1" stroke-dasharray="3 3"/><path d="M14 516.5 H1863" stroke="#8a8a8a" stroke-width="1" stroke-dasharray="3 3"/><path d="M14 543.5 H1863" stroke="#00f0f0" stroke-width="1" stroke-dasharray="3 3"/><path d="M14 571.5 H1863" stroke="#8a8a8a" stroke-width="1" stroke-dasharray="3 3"/><path d="M14 598.5 H1863" stroke="#00f0f0" stroke-width="1" stroke-dasharray="3 3"/><path d="M14 626.5 H1863" stroke="#8a8a8a" stroke-width="1" stroke-dasharray="3 3"/><text x="1558.5" y="311" font-size="16.3" fill="#808080" text-anchor="middle">18.00°</text><text x="1558.5" y="338" font-size="16.3" fill="#00f0f0" text-anchor="middle">36.00°</text><text x="1558.5" y="366" font-size="16.3" fill="#808080" text-anchor="middle">54.00°</text><text x="1558.5" y="393" font-size="16.3" fill="#00f0f0" text-anchor="middle">72.00°</text><text x="1558.5" y="421" font-size="16.3" fill="#808080" text-anchor="middle">90.00°</text><text x="1558.5" y="448" font-size="16.3" fill="#00f0f0" text-anchor="middle">108.00°</text><text x="1558.5" y="476" font-size="16.3" fill="#808080" text-anchor="middle">126.00°</text><text x="1558.5" y="503" font-size="16.3" fill="#00f0f0" text-anchor="middle">144.00°</text><text x="1558.5" y="531" font-size="16.3" fill="#808080" text-anchor="middle">162.00°</text><text x="1558.5" y="558" font-size="16.3" fill="#00f0f0" text-anchor="middle">180.00°</text><text x="1558.5" y="586" font-size="16.3" fill="#808080" text-anchor="middle">198.00°</text><text x="1558.5" y="613" font-size="16.3" fill="#00f0f0" text-anchor="middle">216.00°</text><text x="1558.5" y="641" font-size="16.3" fill="#808080" text-anchor="middle">234.00°</text><path d="M14 224.5 H1863" stroke="#ff0000" stroke-width="5" stroke-dasharray="9 6 3 6"/><path d="M14 246.0 H1863" stroke="#ff0000" stroke-width="2" stroke-dasharray="9 6 3 6"/><path d="M14 248.5 H1863" stroke="#ff0000" stroke-width="1" stroke-dasharray="9 6 3 6"/><path d="M14 408.5 H1863" stroke="#32cd32" stroke-width="5" stroke-dasharray="9 6 3 6"/><path d="M14 430.0 H1863" stroke="#32cd32" stroke-width="2" stroke-dasharray="9 6 3 6"/><path d="M14 432.5 H1863" stroke="#32cd32" stroke-width="1" stroke-dasharray="9 6 3 6"/><path d="M14 592.5 H1863" stroke="#ff0000" stroke-width="5" stroke-dasharray="9 6 3 6"/><path d="M14 613.5 H1863" stroke="#ff0000" stroke-width="1" stroke-dasharray="9 6 3 6"/><path d="M14 616.5 H1863" stroke="#ff0000" stroke-width="1" stroke-dasharray="9 6 3 6"/><rect x="14" y="515" width="1849" height="1" fill="#8090a0"/><text x="22.5" y="219.5" font-size="12" fill="#fff" stroke="#fff" stroke-width="0.2" textLength="34" lengthAdjust="spacingAndGlyphs" shape-rendering="auto">#75 sl</text><text x="22.5" y="221.8" font-size="12" fill="#fff" stroke="#fff" stroke-width="0.2" textLength="34" lengthAdjust="spacingAndGlyphs" shape-rendering="auto">#78 sl</text><text x="22.5" y="224" font-size="12" fill="#fff" stroke="#fff" stroke-width="0.2" textLength="34" lengthAdjust="spacingAndGlyphs" shape-rendering="auto">#76 sl</text><text x="22.5" y="243" font-size="12" fill="#fff" stroke="#fff" stroke-width="0.1" textLength="34" lengthAdjust="spacingAndGlyphs" shape-rendering="auto">#91 sl</text><text x="22.5" y="245.6" font-size="12" fill="#fff" stroke="#fff" stroke-width="0.1" textLength="34" lengthAdjust="spacingAndGlyphs" shape-rendering="auto">#99 sl</text><text x="22.5" y="403.2" font-size="12" fill="#fff" stroke="#fff" stroke-width="0.2" textLength="70.5" lengthAdjust="spacingAndGlyphs" shape-rendering="auto">#75 sell 0.01</text><text x="22.5" y="405.6" font-size="12" fill="#fff" stroke="#fff" stroke-width="0.2" textLength="70.5" lengthAdjust="spacingAndGlyphs" shape-rendering="auto">#78 sell 0.01</text><text x="22.5" y="408" font-size="12" fill="#fff" stroke="#fff" stroke-width="0.2" textLength="70.5" lengthAdjust="spacingAndGlyphs" shape-rendering="auto">#76 sell 0.01</text><text x="22.5" y="427" font-size="12" fill="#fff" stroke="#fff" stroke-width="0.1" textLength="70.5" lengthAdjust="spacingAndGlyphs" shape-rendering="auto">#91 sell 0.01</text><text x="22.5" y="429.8" font-size="12" fill="#fff" stroke="#fff" stroke-width="0.1" textLength="70.5" lengthAdjust="spacingAndGlyphs" shape-rendering="auto">#99 sell 0.01</text><text x="22.5" y="587.8" font-size="12" fill="#fff" stroke="#fff" stroke-width="0.2" textLength="38.5" lengthAdjust="spacingAndGlyphs" shape-rendering="auto">#75 tp</text><text x="22.5" y="590" font-size="12" fill="#fff" stroke="#fff" stroke-width="0.2" textLength="38.5" lengthAdjust="spacingAndGlyphs" shape-rendering="auto">#78 tp</text><text x="22.5" y="592" font-size="12" fill="#fff" stroke="#fff" stroke-width="0.2" textLength="38.5" lengthAdjust="spacingAndGlyphs" shape-rendering="auto">#76 tp</text><text x="22.5" y="611.2" font-size="12" fill="#fff" stroke="#fff" stroke-width="0.1" textLength="38.5" lengthAdjust="spacingAndGlyphs" shape-rendering="auto">#91 tp</text><text x="22.5" y="613.8" font-size="12" fill="#fff" stroke="#fff" stroke-width="0.1" textLength="38.5" lengthAdjust="spacingAndGlyphs" shape-rendering="auto">#99 tp</text><rect x="14" y="236" width="1" height="26" fill="#00ff00"/><rect x="12" y="238" width="5" height="8" fill="#00ff00"/><rect x="13" y="239" width="3" height="6" fill="#fff"/><rect x="22" y="242" width="1" height="11" fill="#00ff00"/><rect x="20" y="245" width="5" height="8" fill="#00ff00"/><rect x="21" y="246" width="3" height="6" fill="#fff"/><rect x="30" y="251" width="1" height="16" fill="#00ff00"/><rect x="28" y="252" width="5" height="11" fill="#00ff00"/><rect x="29" y="253" width="3" height="9" fill="#fff"/><rect x="38" y="258" width="1" height="9" fill="#00ff00"/><rect x="36" y="259" width="5" height="4" fill="#00ff00"/><rect x="37" y="260" width="3" height="2" fill="#000"/><rect x="46" y="256" width="1" height="9" fill="#00ff00"/><rect x="44" y="259" width="5" height="2" fill="#00ff00"/><rect x="54" y="257" width="1" height="10" fill="#00ff00"/><rect x="52" y="261" width="5" height="6" fill="#00ff00"/><rect x="53" y="262" width="3" height="4" fill="#fff"/><rect x="62" y="261" width="1" height="10" fill="#00ff00"/><rect x="60" y="263" width="5" height="4" fill="#00ff00"/><rect x="61" y="264" width="3" height="2" fill="#000"/><rect x="70" y="262" width="1" height="5" fill="#00ff00"/><rect x="68" y="262" width="5" height="2" fill="#00ff00"/><rect x="78" y="255" width="1" height="9" fill="#00ff00"/><rect x="76" y="255" width="5" height="8" fill="#00ff00"/><rect x="77" y="256" width="3" height="6" fill="#000"/><rect x="86" y="255" width="1" height="8" fill="#00ff00"/><rect x="84" y="255" width="5" height="8" fill="#00ff00"/><rect x="85" y="256" width="3" height="6" fill="#fff"/><rect x="94" y="258" width="1" height="9" fill="#00ff00"/><rect x="92" y="262" width="5" height="5" fill="#00ff00"/><rect x="93" y="263" width="3" height="3" fill="#fff"/><rect x="102" y="264" width="1" height="19" fill="#00ff00"/><rect x="100" y="266" width="5" height="12" fill="#00ff00"/><rect x="101" y="267" width="3" height="10" fill="#fff"/><rect x="110" y="269" width="1" height="13" fill="#00ff00"/><rect x="108" y="272" width="5" height="6" fill="#00ff00"/><rect x="109" y="273" width="3" height="4" fill="#000"/><rect x="118" y="272" width="1" height="20" fill="#00ff00"/><rect x="116" y="272" width="5" height="17" fill="#00ff00"/><rect x="117" y="273" width="3" height="15" fill="#fff"/><rect x="126" y="282" width="1" height="10" fill="#00ff00"/><rect x="124" y="282" width="5" height="7" fill="#00ff00"/><rect x="125" y="283" width="3" height="5" fill="#000"/><rect x="134" y="266" width="1" height="19" fill="#00ff00"/><rect x="132" y="271" width="5" height="13" fill="#00ff00"/><rect x="133" y="272" width="3" height="11" fill="#000"/><rect x="142" y="267" width="1" height="14" fill="#00ff00"/><rect x="140" y="269" width="5" height="7" fill="#00ff00"/><rect x="141" y="270" width="3" height="5" fill="#fff"/><rect x="150" y="269" width="1" height="8" fill="#00ff00"/><rect x="148" y="274" width="5" height="2" fill="#00ff00"/><rect x="158" y="273" width="1" height="10" fill="#00ff00"/><rect x="156" y="274" width="5" height="9" fill="#00ff00"/><rect x="157" y="275" width="3" height="7" fill="#fff"/><rect x="166" y="277" width="1" height="6" fill="#00ff00"/><rect x="164" y="279" width="5" height="3" fill="#00ff00"/><rect x="165" y="280" width="3" height="1" fill="#000"/><rect x="174" y="271" width="1" height="19" fill="#00ff00"/><rect x="172" y="279" width="5" height="8" fill="#00ff00"/><rect x="173" y="280" width="3" height="6" fill="#fff"/><rect x="182" y="283" width="1" height="9" fill="#00ff00"/><rect x="180" y="285" width="5" height="3" fill="#00ff00"/><rect x="181" y="286" width="3" height="1" fill="#fff"/><rect x="190" y="283" width="1" height="7" fill="#00ff00"/><rect x="188" y="285" width="5" height="3" fill="#00ff00"/><rect x="189" y="286" width="3" height="1" fill="#000"/><rect x="198" y="282" width="1" height="6" fill="#00ff00"/><rect x="196" y="285" width="5" height="3" fill="#00ff00"/><rect x="197" y="286" width="3" height="1" fill="#fff"/><rect x="206" y="285" width="1" height="8" fill="#00ff00"/><rect x="204" y="288" width="5" height="1" fill="#00ff00"/><rect x="214" y="277" width="1" height="19" fill="#00ff00"/><rect x="212" y="278" width="5" height="10" fill="#00ff00"/><rect x="213" y="279" width="3" height="8" fill="#000"/><rect x="222" y="277" width="1" height="6" fill="#00ff00"/><rect x="220" y="277" width="5" height="2" fill="#00ff00"/><rect x="230" y="265" width="1" height="18" fill="#00ff00"/><rect x="228" y="274" width="5" height="5" fill="#00ff00"/><rect x="229" y="275" width="3" height="3" fill="#000"/><rect x="238" y="260" width="1" height="23" fill="#00ff00"/><rect x="236" y="262" width="5" height="13" fill="#00ff00"/><rect x="237" y="263" width="3" height="11" fill="#000"/><rect x="246" y="262" width="1" height="25" fill="#00ff00"/><rect x="244" y="262" width="5" height="17" fill="#00ff00"/><rect x="245" y="263" width="3" height="15" fill="#fff"/><rect x="254" y="275" width="1" height="25" fill="#00ff00"/><rect x="252" y="278" width="5" height="22" fill="#00ff00"/><rect x="253" y="279" width="3" height="20" fill="#fff"/><rect x="262" y="298" width="1" height="19" fill="#00ff00"/><rect x="260" y="298" width="5" height="8" fill="#00ff00"/><rect x="261" y="299" width="3" height="6" fill="#fff"/><rect x="270" y="306" width="1" height="44" fill="#00ff00"/><rect x="268" y="306" width="5" height="35" fill="#00ff00"/><rect x="269" y="307" width="3" height="33" fill="#fff"/><rect x="278" y="340" width="1" height="28" fill="#00ff00"/><rect x="276" y="340" width="5" height="22" fill="#00ff00"/><rect x="277" y="341" width="3" height="20" fill="#fff"/><rect x="286" y="354" width="1" height="51" fill="#00ff00"/><rect x="284" y="361" width="5" height="34" fill="#00ff00"/><rect x="285" y="362" width="3" height="32" fill="#fff"/><rect x="294" y="367" width="1" height="30" fill="#00ff00"/><rect x="292" y="368" width="5" height="27" fill="#00ff00"/><rect x="293" y="369" width="3" height="25" fill="#000"/><rect x="302" y="363" width="1" height="29" fill="#00ff00"/><rect x="300" y="368" width="5" height="8" fill="#00ff00"/><rect x="301" y="369" width="3" height="6" fill="#fff"/><rect x="310" y="354" width="1" height="25" fill="#00ff00"/><rect x="308" y="358" width="5" height="18" fill="#00ff00"/><rect x="309" y="359" width="3" height="16" fill="#000"/><rect x="318" y="351" width="1" height="14" fill="#00ff00"/><rect x="316" y="357" width="5" height="2" fill="#00ff00"/><rect x="326" y="353" width="1" height="20" fill="#00ff00"/><rect x="324" y="357" width="5" height="12" fill="#00ff00"/><rect x="325" y="358" width="3" height="10" fill="#fff"/><rect x="334" y="358" width="1" height="24" fill="#00ff00"/><rect x="332" y="368" width="5" height="6" fill="#00ff00"/><rect x="333" y="369" width="3" height="4" fill="#fff"/><rect x="342" y="363" width="1" height="20" fill="#00ff00"/><rect x="340" y="373" width="5" height="3" fill="#00ff00"/><rect x="341" y="374" width="3" height="1" fill="#fff"/><rect x="350" y="370" width="1" height="19" fill="#00ff00"/><rect x="348" y="375" width="5" height="13" fill="#00ff00"/><rect x="349" y="376" width="3" height="11" fill="#fff"/><rect x="358" y="386" width="1" height="16" fill="#00ff00"/><rect x="356" y="387" width="5" height="5" fill="#00ff00"/><rect x="357" y="388" width="3" height="3" fill="#fff"/><rect x="366" y="369" width="1" height="23" fill="#00ff00"/><rect x="364" y="371" width="5" height="19" fill="#00ff00"/><rect x="365" y="372" width="3" height="17" fill="#000"/><rect x="374" y="368" width="1" height="21" fill="#00ff00"/><rect x="372" y="371" width="5" height="12" fill="#00ff00"/><rect x="373" y="372" width="3" height="10" fill="#fff"/><rect x="382" y="381" width="1" height="14" fill="#00ff00"/><rect x="380" y="381" width="5" height="8" fill="#00ff00"/><rect x="381" y="382" width="3" height="6" fill="#fff"/><rect x="390" y="384" width="1" height="47" fill="#00ff00"/><rect x="388" y="389" width="5" height="20" fill="#00ff00"/><rect x="389" y="390" width="3" height="18" fill="#fff"/><rect x="398" y="403" width="1" height="15" fill="#00ff00"/><rect x="396" y="406" width="5" height="4" fill="#00ff00"/><rect x="397" y="407" width="3" height="2" fill="#000"/><rect x="406" y="392" width="1" height="16" fill="#00ff00"/><rect x="404" y="394" width="5" height="13" fill="#00ff00"/><rect x="405" y="395" width="3" height="11" fill="#000"/><rect x="414" y="385" width="1" height="16" fill="#00ff00"/><rect x="412" y="394" width="5" height="5" fill="#00ff00"/><rect x="413" y="395" width="3" height="3" fill="#fff"/><rect x="422" y="397" width="1" height="14" fill="#00ff00"/><rect x="420" y="398" width="5" height="6" fill="#00ff00"/><rect x="421" y="399" width="3" height="4" fill="#fff"/><rect x="430" y="388" width="1" height="25" fill="#00ff00"/><rect x="428" y="392" width="5" height="12" fill="#00ff00"/><rect x="429" y="393" width="3" height="10" fill="#000"/><rect x="438" y="367" width="1" height="28" fill="#00ff00"/><rect x="436" y="370" width="5" height="23" fill="#00ff00"/><rect x="437" y="371" width="3" height="21" fill="#000"/><rect x="446" y="363" width="1" height="20" fill="#00ff00"/><rect x="444" y="370" width="5" height="4" fill="#00ff00"/><rect x="445" y="371" width="3" height="2" fill="#fff"/><rect x="454" y="356" width="1" height="19" fill="#00ff00"/><rect x="452" y="368" width="5" height="6" fill="#00ff00"/><rect x="453" y="369" width="3" height="4" fill="#000"/><rect x="462" y="367" width="1" height="28" fill="#00ff00"/><rect x="460" y="368" width="5" height="21" fill="#00ff00"/><rect x="461" y="369" width="3" height="19" fill="#fff"/><rect x="470" y="381" width="1" height="22" fill="#00ff00"/><rect x="468" y="389" width="5" height="11" fill="#00ff00"/><rect x="469" y="390" width="3" height="9" fill="#fff"/><rect x="478" y="398" width="1" height="42" fill="#00ff00"/><rect x="476" y="399" width="5" height="34" fill="#00ff00"/><rect x="477" y="400" width="3" height="32" fill="#fff"/><rect x="486" y="432" width="1" height="21" fill="#00ff00"/><rect x="484" y="432" width="5" height="6" fill="#00ff00"/><rect x="485" y="433" width="3" height="4" fill="#fff"/><rect x="494" y="433" width="1" height="33" fill="#00ff00"/><rect x="492" y="437" width="5" height="12" fill="#00ff00"/><rect x="493" y="438" width="3" height="10" fill="#fff"/><rect x="502" y="443" width="1" height="46" fill="#00ff00"/><rect x="500" y="448" width="5" height="41" fill="#00ff00"/><rect x="501" y="449" width="3" height="39" fill="#fff"/><rect x="510" y="470" width="1" height="37" fill="#00ff00"/><rect x="508" y="474" width="5" height="15" fill="#00ff00"/><rect x="509" y="475" width="3" height="13" fill="#000"/><rect x="518" y="450" width="1" height="46" fill="#00ff00"/><rect x="516" y="450" width="5" height="25" fill="#00ff00"/><rect x="517" y="451" width="3" height="23" fill="#000"/><rect x="526" y="444" width="1" height="22" fill="#00ff00"/><rect x="524" y="450" width="5" height="13" fill="#00ff00"/><rect x="525" y="451" width="3" height="11" fill="#fff"/><rect x="534" y="453" width="1" height="20" fill="#00ff00"/><rect x="532" y="454" width="5" height="9" fill="#00ff00"/><rect x="533" y="455" width="3" height="7" fill="#000"/><rect x="542" y="449" width="1" height="18" fill="#00ff00"/><rect x="540" y="451" width="5" height="4" fill="#00ff00"/><rect x="541" y="452" width="3" height="2" fill="#000"/><rect x="550" y="425" width="1" height="29" fill="#00ff00"/><rect x="548" y="427" width="5" height="26" fill="#00ff00"/><rect x="549" y="428" width="3" height="24" fill="#000"/><rect x="558" y="407" width="1" height="24" fill="#00ff00"/><rect x="556" y="410" width="5" height="18" fill="#00ff00"/><rect x="557" y="411" width="3" height="16" fill="#000"/><rect x="566" y="401" width="1" height="16" fill="#00ff00"/><rect x="564" y="410" width="5" height="1" fill="#00ff00"/><rect x="574" y="398" width="1" height="15" fill="#00ff00"/><rect x="572" y="406" width="5" height="5" fill="#00ff00"/><rect x="573" y="407" width="3" height="3" fill="#000"/><rect x="582" y="401" width="1" height="16" fill="#00ff00"/><rect x="580" y="406" width="5" height="7" fill="#00ff00"/><rect x="581" y="407" width="3" height="5" fill="#fff"/><rect x="590" y="411" width="1" height="9" fill="#00ff00"/><rect x="588" y="412" width="5" height="5" fill="#00ff00"/><rect x="589" y="413" width="3" height="3" fill="#fff"/><rect x="598" y="414" width="1" height="10" fill="#00ff00"/><rect x="596" y="416" width="5" height="7" fill="#00ff00"/><rect x="597" y="417" width="3" height="5" fill="#fff"/><rect x="606" y="403" width="1" height="21" fill="#00ff00"/><rect x="604" y="407" width="5" height="17" fill="#00ff00"/><rect x="605" y="408" width="3" height="15" fill="#000"/><rect x="614" y="400" width="1" height="36" fill="#00ff00"/><rect x="612" y="407" width="5" height="16" fill="#00ff00"/><rect x="613" y="408" width="3" height="14" fill="#fff"/><rect x="622" y="418" width="1" height="24" fill="#00ff00"/><rect x="620" y="421" width="5" height="17" fill="#00ff00"/><rect x="621" y="422" width="3" height="15" fill="#fff"/><rect x="630" y="429" width="1" height="12" fill="#00ff00"/><rect x="628" y="431" width="5" height="7" fill="#00ff00"/><rect x="629" y="432" width="3" height="5" fill="#000"/><rect x="638" y="412" width="1" height="22" fill="#00ff00"/><rect x="636" y="419" width="5" height="13" fill="#00ff00"/><rect x="637" y="420" width="3" height="11" fill="#000"/><rect x="646" y="410" width="1" height="16" fill="#00ff00"/><rect x="644" y="418" width="5" height="3" fill="#00ff00"/><rect x="645" y="419" width="3" height="1" fill="#000"/><rect x="654" y="412" width="1" height="16" fill="#00ff00"/><rect x="652" y="417" width="5" height="3" fill="#00ff00"/><rect x="653" y="418" width="3" height="1" fill="#000"/><rect x="662" y="400" width="1" height="17" fill="#00ff00"/><rect x="660" y="400" width="5" height="17" fill="#00ff00"/><rect x="661" y="401" width="3" height="15" fill="#000"/><rect x="670" y="378" width="1" height="25" fill="#00ff00"/><rect x="668" y="382" width="5" height="19" fill="#00ff00"/><rect x="669" y="383" width="3" height="17" fill="#000"/><rect x="678" y="369" width="1" height="15" fill="#00ff00"/><rect x="676" y="370" width="5" height="13" fill="#00ff00"/><rect x="677" y="371" width="3" height="11" fill="#000"/><rect x="686" y="367" width="1" height="9" fill="#00ff00"/><rect x="684" y="370" width="5" height="4" fill="#00ff00"/><rect x="685" y="371" width="3" height="2" fill="#fff"/><rect x="694" y="371" width="1" height="6" fill="#00ff00"/><rect x="692" y="374" width="5" height="1" fill="#00ff00"/><rect x="702" y="370" width="1" height="9" fill="#00ff00"/><rect x="700" y="373" width="5" height="6" fill="#00ff00"/><rect x="701" y="374" width="3" height="4" fill="#fff"/><rect x="710" y="371" width="1" height="14" fill="#00ff00"/><rect x="708" y="378" width="5" height="6" fill="#00ff00"/><rect x="709" y="379" width="3" height="4" fill="#fff"/><rect x="718" y="376" width="1" height="30" fill="#00ff00"/><rect x="716" y="381" width="5" height="14" fill="#00ff00"/><rect x="717" y="382" width="3" height="12" fill="#fff"/><rect x="726" y="375" width="1" height="29" fill="#00ff00"/><rect x="724" y="393" width="5" height="2" fill="#00ff00"/><rect x="734" y="383" width="1" height="13" fill="#00ff00"/><rect x="732" y="389" width="5" height="6" fill="#00ff00"/><rect x="733" y="390" width="3" height="4" fill="#000"/><rect x="742" y="384" width="1" height="17" fill="#00ff00"/><rect x="740" y="388" width="5" height="9" fill="#00ff00"/><rect x="741" y="389" width="3" height="7" fill="#fff"/><rect x="750" y="387" width="1" height="11" fill="#00ff00"/><rect x="748" y="390" width="5" height="8" fill="#00ff00"/><rect x="749" y="391" width="3" height="6" fill="#000"/><rect x="758" y="384" width="1" height="8" fill="#00ff00"/><rect x="756" y="385" width="5" height="6" fill="#00ff00"/><rect x="757" y="386" width="3" height="4" fill="#000"/><rect x="766" y="385" width="1" height="9" fill="#00ff00"/><rect x="764" y="385" width="5" height="8" fill="#00ff00"/><rect x="765" y="386" width="3" height="6" fill="#fff"/><rect x="774" y="388" width="1" height="7" fill="#00ff00"/><rect x="772" y="392" width="5" height="3" fill="#00ff00"/><rect x="773" y="393" width="3" height="1" fill="#fff"/><rect x="782" y="388" width="1" height="14" fill="#00ff00"/><rect x="780" y="394" width="5" height="5" fill="#00ff00"/><rect x="781" y="395" width="3" height="3" fill="#fff"/><rect x="790" y="398" width="1" height="9" fill="#00ff00"/><rect x="788" y="398" width="5" height="9" fill="#00ff00"/><rect x="789" y="399" width="3" height="7" fill="#fff"/><rect x="798" y="398" width="1" height="9" fill="#00ff00"/><rect x="796" y="403" width="5" height="4" fill="#00ff00"/><rect x="797" y="404" width="3" height="2" fill="#000"/><rect x="806" y="399" width="1" height="7" fill="#00ff00"/><rect x="804" y="403" width="5" height="1" fill="#00ff00"/><rect x="814" y="399" width="1" height="8" fill="#00ff00"/><rect x="812" y="403" width="5" height="4" fill="#00ff00"/><rect x="813" y="404" width="3" height="2" fill="#fff"/><rect x="822" y="400" width="1" height="7" fill="#00ff00"/><rect x="820" y="402" width="5" height="5" fill="#00ff00"/><rect x="821" y="403" width="3" height="3" fill="#000"/><rect x="830" y="397" width="1" height="11" fill="#00ff00"/><rect x="828" y="399" width="5" height="3" fill="#00ff00"/><rect x="829" y="400" width="3" height="1" fill="#000"/><rect x="838" y="399" width="1" height="8" fill="#00ff00"/><rect x="836" y="399" width="5" height="8" fill="#00ff00"/><rect x="837" y="400" width="3" height="6" fill="#fff"/><rect x="846" y="403" width="1" height="4" fill="#00ff00"/><rect x="844" y="405" width="5" height="1" fill="#00ff00"/><rect x="854" y="402" width="1" height="10" fill="#00ff00"/><rect x="852" y="405" width="5" height="5" fill="#00ff00"/><rect x="853" y="406" width="3" height="3" fill="#fff"/><rect x="862" y="394" width="1" height="16" fill="#00ff00"/><rect x="860" y="405" width="5" height="5" fill="#00ff00"/><rect x="861" y="406" width="3" height="3" fill="#000"/><rect x="870" y="393" width="1" height="17" fill="#00ff00"/><rect x="868" y="398" width="5" height="8" fill="#00ff00"/><rect x="869" y="399" width="3" height="6" fill="#000"/><rect x="878" y="397" width="1" height="8" fill="#00ff00"/><rect x="876" y="396" width="5" height="3" fill="#00ff00"/><rect x="877" y="397" width="3" height="1" fill="#000"/><rect x="886" y="389" width="1" height="15" fill="#00ff00"/><rect x="884" y="396" width="5" height="5" fill="#00ff00"/><rect x="885" y="397" width="3" height="3" fill="#fff"/><rect x="894" y="392" width="1" height="20" fill="#00ff00"/><rect x="892" y="401" width="5" height="10" fill="#00ff00"/><rect x="893" y="402" width="3" height="8" fill="#fff"/><rect x="902" y="410" width="1" height="22" fill="#00ff00"/><rect x="900" y="410" width="5" height="21" fill="#00ff00"/><rect x="901" y="411" width="3" height="19" fill="#fff"/><rect x="910" y="428" width="1" height="15" fill="#00ff00"/><rect x="908" y="429" width="5" height="2" fill="#00ff00"/><rect x="918" y="421" width="1" height="12" fill="#00ff00"/><rect x="916" y="423" width="5" height="8" fill="#00ff00"/><rect x="917" y="424" width="3" height="6" fill="#000"/><rect x="926" y="421" width="1" height="7" fill="#00ff00"/><rect x="924" y="421" width="5" height="3" fill="#00ff00"/><rect x="925" y="422" width="3" height="1" fill="#000"/><rect x="934" y="414" width="1" height="10" fill="#00ff00"/><rect x="932" y="417" width="5" height="6" fill="#00ff00"/><rect x="933" y="418" width="3" height="4" fill="#000"/><rect x="942" y="417" width="1" height="10" fill="#00ff00"/><rect x="940" y="417" width="5" height="8" fill="#00ff00"/><rect x="941" y="418" width="3" height="6" fill="#fff"/><rect x="950" y="420" width="1" height="6" fill="#00ff00"/><rect x="948" y="424" width="5" height="2" fill="#00ff00"/><rect x="958" y="421" width="1" height="8" fill="#00ff00"/><rect x="956" y="424" width="5" height="5" fill="#00ff00"/><rect x="957" y="425" width="3" height="3" fill="#fff"/><rect x="966" y="424" width="1" height="7" fill="#00ff00"/><rect x="964" y="425" width="5" height="5" fill="#00ff00"/><rect x="965" y="426" width="3" height="3" fill="#000"/><rect x="974" y="424" width="1" height="13" fill="#00ff00"/><rect x="972" y="423" width="5" height="3" fill="#00ff00"/><rect x="973" y="424" width="3" height="1" fill="#000"/><rect x="982" y="414" width="1" height="16" fill="#00ff00"/><rect x="980" y="419" width="5" height="6" fill="#00ff00"/><rect x="981" y="420" width="3" height="4" fill="#000"/><rect x="990" y="415" width="1" height="10" fill="#00ff00"/><rect x="988" y="418" width="5" height="3" fill="#00ff00"/><rect x="989" y="419" width="3" height="1" fill="#000"/><rect x="998" y="417" width="1" height="38" fill="#00ff00"/><rect x="996" y="418" width="5" height="30" fill="#00ff00"/><rect x="997" y="419" width="3" height="28" fill="#fff"/><rect x="1006" y="430" width="1" height="20" fill="#00ff00"/><rect x="1004" y="440" width="5" height="8" fill="#00ff00"/><rect x="1005" y="441" width="3" height="6" fill="#000"/><rect x="1014" y="438" width="1" height="31" fill="#00ff00"/><rect x="1012" y="440" width="5" height="23" fill="#00ff00"/><rect x="1013" y="441" width="3" height="21" fill="#fff"/><rect x="1022" y="437" width="1" height="33" fill="#00ff00"/><rect x="1020" y="439" width="5" height="24" fill="#00ff00"/><rect x="1021" y="440" width="3" height="22" fill="#000"/><rect x="1030" y="431" width="1" height="24" fill="#00ff00"/><rect x="1028" y="433" width="5" height="7" fill="#00ff00"/><rect x="1029" y="434" width="3" height="5" fill="#000"/><rect x="1038" y="425" width="1" height="53" fill="#00ff00"/><rect x="1036" y="433" width="5" height="33" fill="#00ff00"/><rect x="1037" y="434" width="3" height="31" fill="#fff"/><rect x="1046" y="439" width="1" height="32" fill="#00ff00"/><rect x="1044" y="452" width="5" height="14" fill="#00ff00"/><rect x="1045" y="453" width="3" height="12" fill="#000"/><rect x="1054" y="442" width="1" height="20" fill="#00ff00"/><rect x="1052" y="452" width="5" height="2" fill="#00ff00"/><rect x="1062" y="387" width="1" height="68" fill="#00ff00"/><rect x="1060" y="399" width="5" height="56" fill="#00ff00"/><rect x="1061" y="400" width="3" height="54" fill="#000"/><rect x="1070" y="390" width="1" height="39" fill="#00ff00"/><rect x="1068" y="399" width="5" height="30" fill="#00ff00"/><rect x="1069" y="400" width="3" height="28" fill="#fff"/><rect x="1078" y="421" width="1" height="20" fill="#00ff00"/><rect x="1076" y="429" width="5" height="8" fill="#00ff00"/><rect x="1077" y="430" width="3" height="6" fill="#fff"/><rect x="1086" y="415" width="1" height="22" fill="#00ff00"/><rect x="1084" y="415" width="5" height="21" fill="#00ff00"/><rect x="1085" y="416" width="3" height="19" fill="#000"/><rect x="1094" y="413" width="1" height="27" fill="#00ff00"/><rect x="1092" y="415" width="5" height="18" fill="#00ff00"/><rect x="1093" y="416" width="3" height="16" fill="#fff"/><rect x="1102" y="423" width="1" height="19" fill="#00ff00"/><rect x="1100" y="432" width="5" height="6" fill="#00ff00"/><rect x="1101" y="433" width="3" height="4" fill="#fff"/><rect x="1110" y="434" width="1" height="26" fill="#00ff00"/><rect x="1108" y="437" width="5" height="14" fill="#00ff00"/><rect x="1109" y="438" width="3" height="12" fill="#fff"/><rect x="1118" y="437" width="1" height="16" fill="#00ff00"/><rect x="1116" y="437" width="5" height="15" fill="#00ff00"/><rect x="1117" y="438" width="3" height="13" fill="#000"/><rect x="1126" y="430" width="1" height="14" fill="#00ff00"/><rect x="1124" y="437" width="5" height="7" fill="#00ff00"/><rect x="1125" y="438" width="3" height="5" fill="#fff"/><rect x="1134" y="424" width="1" height="27" fill="#00ff00"/><rect x="1132" y="424" width="5" height="20" fill="#00ff00"/><rect x="1133" y="425" width="3" height="18" fill="#000"/><rect x="1142" y="417" width="1" height="10" fill="#00ff00"/><rect x="1140" y="424" width="5" height="2" fill="#00ff00"/><rect x="1150" y="412" width="1" height="14" fill="#00ff00"/><rect x="1148" y="415" width="5" height="11" fill="#00ff00"/><rect x="1149" y="416" width="3" height="9" fill="#000"/><rect x="1158" y="404" width="1" height="17" fill="#00ff00"/><rect x="1156" y="405" width="5" height="11" fill="#00ff00"/><rect x="1157" y="406" width="3" height="9" fill="#000"/><rect x="1166" y="391" width="1" height="23" fill="#00ff00"/><rect x="1164" y="393" width="5" height="13" fill="#00ff00"/><rect x="1165" y="394" width="3" height="11" fill="#000"/><rect x="1174" y="385" width="1" height="21" fill="#00ff00"/><rect x="1172" y="393" width="5" height="13" fill="#00ff00"/><rect x="1173" y="394" width="3" height="11" fill="#fff"/><rect x="1182" y="404" width="1" height="30" fill="#00ff00"/><rect x="1180" y="405" width="5" height="26" fill="#00ff00"/><rect x="1181" y="406" width="3" height="24" fill="#fff"/><rect x="1190" y="424" width="1" height="27" fill="#00ff00"/><rect x="1188" y="430" width="5" height="18" fill="#00ff00"/><rect x="1189" y="431" width="3" height="16" fill="#fff"/><rect x="1198" y="424" width="1" height="25" fill="#00ff00"/><rect x="1196" y="424" width="5" height="23" fill="#00ff00"/><rect x="1197" y="425" width="3" height="21" fill="#000"/><rect x="1206" y="424" width="1" height="27" fill="#00ff00"/><rect x="1204" y="425" width="5" height="17" fill="#00ff00"/><rect x="1205" y="426" width="3" height="15" fill="#fff"/><rect x="1214" y="428" width="1" height="18" fill="#00ff00"/><rect x="1212" y="430" width="5" height="12" fill="#00ff00"/><rect x="1213" y="431" width="3" height="10" fill="#000"/><rect x="1222" y="415" width="1" height="25" fill="#00ff00"/><rect x="1220" y="417" width="5" height="14" fill="#00ff00"/><rect x="1221" y="418" width="3" height="12" fill="#000"/><rect x="1230" y="398" width="1" height="39" fill="#00ff00"/><rect x="1228" y="417" width="5" height="5" fill="#00ff00"/><rect x="1229" y="418" width="3" height="3" fill="#fff"/><rect x="1238" y="414" width="1" height="51" fill="#00ff00"/><rect x="1236" y="421" width="5" height="26" fill="#00ff00"/><rect x="1237" y="422" width="3" height="24" fill="#fff"/><rect x="1246" y="411" width="1" height="40" fill="#00ff00"/><rect x="1244" y="432" width="5" height="15" fill="#00ff00"/><rect x="1245" y="433" width="3" height="13" fill="#000"/><rect x="1254" y="416" width="1" height="26" fill="#00ff00"/><rect x="1252" y="432" width="5" height="7" fill="#00ff00"/><rect x="1253" y="433" width="3" height="5" fill="#fff"/><rect x="1262" y="454" width="1" height="65" fill="#00ff00"/><rect x="1260" y="457" width="5" height="51" fill="#00ff00"/><rect x="1261" y="458" width="3" height="49" fill="#fff"/><rect x="1270" y="506" width="1" height="66" fill="#00ff00"/><rect x="1268" y="507" width="5" height="64" fill="#00ff00"/><rect x="1269" y="508" width="3" height="62" fill="#fff"/><rect x="1278" y="551" width="1" height="25" fill="#00ff00"/><rect x="1276" y="556" width="5" height="15" fill="#00ff00"/><rect x="1277" y="557" width="3" height="13" fill="#000"/><rect x="1286" y="513" width="1" height="50" fill="#00ff00"/><rect x="1284" y="517" width="5" height="40" fill="#00ff00"/><rect x="1285" y="518" width="3" height="38" fill="#000"/><rect x="1294" y="513" width="1" height="54" fill="#00ff00"/><rect x="1292" y="516" width="5" height="46" fill="#00ff00"/><rect x="1293" y="517" width="3" height="44" fill="#fff"/><rect x="1302" y="529" width="1" height="47" fill="#00ff00"/><rect x="1300" y="543" width="5" height="19" fill="#00ff00"/><rect x="1301" y="544" width="3" height="17" fill="#000"/><rect x="1310" y="533" width="1" height="19" fill="#00ff00"/><rect x="1308" y="543" width="5" height="6" fill="#00ff00"/><rect x="1309" y="544" width="3" height="4" fill="#fff"/><rect x="1318" y="536" width="1" height="30" fill="#00ff00"/><rect x="1316" y="548" width="5" height="1" fill="#00ff00"/><rect x="1326" y="544" width="1" height="31" fill="#00ff00"/><rect x="1324" y="548" width="5" height="27" fill="#00ff00"/><rect x="1325" y="549" width="3" height="25" fill="#fff"/><rect x="1334" y="564" width="1" height="22" fill="#00ff00"/><rect x="1332" y="573" width="5" height="8" fill="#00ff00"/><rect x="1333" y="574" width="3" height="6" fill="#fff"/><rect x="1342" y="561" width="1" height="21" fill="#00ff00"/><rect x="1340" y="569" width="5" height="13" fill="#00ff00"/><rect x="1341" y="570" width="3" height="11" fill="#000"/><rect x="1350" y="554" width="1" height="16" fill="#00ff00"/><rect x="1348" y="554" width="5" height="16" fill="#00ff00"/><rect x="1349" y="555" width="3" height="14" fill="#000"/><rect x="1358" y="545" width="1" height="24" fill="#00ff00"/><rect x="1356" y="552" width="5" height="4" fill="#00ff00"/><rect x="1357" y="553" width="3" height="2" fill="#000"/><rect x="1366" y="524" width="1" height="32" fill="#00ff00"/><rect x="1364" y="525" width="5" height="28" fill="#00ff00"/><rect x="1365" y="526" width="3" height="26" fill="#000"/><rect x="1374" y="504" width="1" height="29" fill="#00ff00"/><rect x="1372" y="504" width="5" height="22" fill="#00ff00"/><rect x="1373" y="505" width="3" height="20" fill="#000"/><rect x="1382" y="500" width="1" height="21" fill="#00ff00"/><rect x="1380" y="504" width="5" height="16" fill="#00ff00"/><rect x="1381" y="505" width="3" height="14" fill="#fff"/><rect x="1390" y="511" width="1" height="13" fill="#00ff00"/><rect x="1388" y="517" width="5" height="3" fill="#00ff00"/><rect x="1389" y="518" width="3" height="1" fill="#000"/><rect x="1398" y="508" width="1" height="12" fill="#00ff00"/><rect x="1396" y="517" width="5" height="2" fill="#00ff00"/><rect x="1406" y="513" width="1" height="10" fill="#00ff00"/><rect x="1404" y="515" width="5" height="3" fill="#00ff00"/><rect x="1405" y="516" width="3" height="1" fill="#000"/><rect x="1414" y="513" width="1" height="22" fill="#00ff00"/><rect x="1412" y="515" width="5" height="18" fill="#00ff00"/><rect x="1413" y="516" width="3" height="16" fill="#fff"/><rect x="1422" y="511" width="1" height="22" fill="#00ff00"/><rect x="1420" y="513" width="5" height="19" fill="#00ff00"/><rect x="1421" y="514" width="3" height="17" fill="#000"/><rect x="1430" y="508" width="1" height="8" fill="#00ff00"/><rect x="1428" y="513" width="5" height="2" fill="#00ff00"/><rect x="1438" y="512" width="1" height="9" fill="#00ff00"/><rect x="1436" y="512" width="5" height="6" fill="#00ff00"/><rect x="1437" y="513" width="3" height="4" fill="#fff"/><rect x="1446" y="510" width="1" height="12" fill="#00ff00"/><rect x="1444" y="511" width="5" height="7" fill="#00ff00"/><rect x="1445" y="512" width="3" height="5" fill="#000"/><rect x="1454" y="508" width="1" height="10" fill="#00ff00"/><rect x="1452" y="511" width="5" height="3" fill="#00ff00"/><rect x="1453" y="512" width="3" height="1" fill="#fff"/><rect x="1462" y="508" width="1" height="6" fill="#00ff00"/><rect x="1460" y="512" width="5" height="2" fill="#00ff00"/><rect x="1470" y="511" width="1" height="7" fill="#00ff00"/><rect x="1468" y="512" width="5" height="2" fill="#00ff00"/><rect x="1478" y="515" width="1" height="3" fill="#00ff00"/><rect x="1476" y="515" width="5" height="1" fill="#00ff00"/><polyline points="14,238.0 85,239.2 130,241.9 150,242.3 166,243.5 182,244.8 206,245.6 222,246.9 255,247.2 262,248.5 271,249.8 279,250.6 286,251.9 294,253.1 302,254.4 310,255.2 318,256.2 326,257.5 334,258.8 342,260.0 350,261.2 359,263.1 367,264.6 385,266.2 435,275.0 480,283.1 494,285.0 511,290.0 530,294.4 547,298.8 567,301.3 582,304.4 599,306.9 615,308.5 630,311.3 646,313.1 661,316.3 677,318.1 695,319.0 711,320.6 719,322.3 730,323.0 805,330.0 880,337.0 960,345.2 1016,351.4 1072,359.0 1129,364.7 1185,368.3 1240,373.1 1255,374.4 1271,376.9 1290,381.9 1310,386.9 1330,391.3 1350,395.6 1370,400.0 1390,403.1 1410,406.3 1430,409.4 1450,412.5 1465,415.0 1478,416.0" fill="none" stroke="#ffff00" stroke-width="2" shape-rendering="crispEdges"/><polyline points="14,220.0 85,222.5 130,224.0 158,225.6 182,226.9 222,227.8 262,228.8 279,229.8 295,231.0 310,231.9 335,233.1 351,234.0 367,235.0 399,237.5 439,241.0 479,245.0 519,250.6 559,254.8 597,258.1 680,263.2 755,267.5 830,272.5 905,278.0 960,281.7 1044,289.0 1129,296.6 1213,305.0 1269,312.0 1326,323.3 1382,331.7 1438,338.8 1478,342.4" fill="none" stroke="#0000ff" stroke-width="2" shape-rendering="crispEdges"/><polyline points="14,308.0 30,308.0 31,307.0 134,307.0 135,306.0 325,306.0 380,307.5 422,308.7 480,310.0 502,310.9 534,311.9 566,312.8 606,313.8 639,314.8 694,315.6 719,315.9 780,317.0 855,318.7 960,321.0 1044,323.9 1129,326.0 1213,328.0 1269,330.3 1326,333.0 1382,335.4 1438,338.2 1478,340.7" fill="none" stroke="#ff0000" stroke-width="2" shape-rendering="crispEdges"/><polyline points="14,289.0 86,289.0 87,288.0 285,288.0 325,289.2 360,290.5 410,292.5 447,293.7 480,294.8 494,295.6 510,296.5 527,297.9 550,298.5 575,299.4 599,300.9 622,301.6 646,302.8 679,303.8 719,304.8 780,305.7 880,309.5 960,312.6 1044,316.3 1129,319.6 1213,322.5 1269,325.6 1326,329.8 1382,333.7 1438,337.7 1478,340.2" fill="none" stroke="#ff1493" stroke-width="2" shape-rendering="crispEdges"/><rect x="14" y="268" width="1849" height="1" fill="#00f4f4"/><path d="M393.2 407.1 h2.4 v-2 l3.4 3.4 l-3.4 3.4 v-2 h-2.4 z" fill="#ff0000" stroke="#fff" stroke-width="2" paint-order="stroke" stroke-linejoin="miter" shape-rendering="auto"/><path d="M481.2 431.1 h2.4 v-2 l3.4 3.4 l-3.4 3.4 v-2 h-2.4 z" fill="#ff0000" stroke="#fff" stroke-width="2" paint-order="stroke" stroke-linejoin="miter" shape-rendering="auto"/><path d="M793.2 405.1 h2.4 v-2 l3.4 3.4 l-3.4 3.4 v-2 h-2.4 z" fill="#ff0000" stroke="#fff" stroke-width="2" paint-order="stroke" stroke-linejoin="miter" shape-rendering="auto"/><path d="M817.2 406.1 h2.4 v-2 l3.4 3.4 l-3.4 3.4 v-2 h-2.4 z" fill="#ff0000" stroke="#fff" stroke-width="2" paint-order="stroke" stroke-linejoin="miter" shape-rendering="auto"/><path d="M841.2 405.1 h2.4 v-2 l3.4 3.4 l-3.4 3.4 v-2 h-2.4 z" fill="#ff0000" stroke="#fff" stroke-width="2" paint-order="stroke" stroke-linejoin="miter" shape-rendering="auto"/><path d="M857.2 408.1 h2.4 v-2 l3.4 3.4 l-3.4 3.4 v-2 h-2.4 z" fill="#ff0000" stroke="#fff" stroke-width="2" paint-order="stroke" stroke-linejoin="miter" shape-rendering="auto"/><path d="M897.2 409.1 h2.4 v-2 l3.4 3.4 l-3.4 3.4 v-2 h-2.4 z" fill="#ff0000" stroke="#fff" stroke-width="2" paint-order="stroke" stroke-linejoin="miter" shape-rendering="auto"/><path d="M1073.2 428.1 h2.4 v-2 l3.4 3.4 l-3.4 3.4 v-2 h-2.4 z" fill="#ff0000" stroke="#fff" stroke-width="2" paint-order="stroke" stroke-linejoin="miter" shape-rendering="auto"/><path d="M1185.2 429.1 h2.4 v-2 l3.4 3.4 l-3.4 3.4 v-2 h-2.4 z" fill="#ff0000" stroke="#fff" stroke-width="2" paint-order="stroke" stroke-linejoin="miter" shape-rendering="auto"/></g><polygon points="1486,136 1497,136 1491.5,142" fill="#8090a0" shape-rendering="auto"/><text x="18.2" y="150" font-size="12" fill="#fff" textLength="71" lengthAdjust="spacingAndGlyphs">EURUSD,M15</text><text x="98.2" y="150" font-size="12" fill="#fff" textLength="45.3" lengthAdjust="spacingAndGlyphs">1.13064</text><text x="148.2" y="150" font-size="12" fill="#fff" textLength="45.3" lengthAdjust="spacingAndGlyphs">1.13065</text><text x="198.3" y="150" font-size="12" fill="#fff" textLength="45.3" lengthAdjust="spacingAndGlyphs">1.13060</text><text x="248.3" y="150" font-size="12" fill="#fff" textLength="45.3" lengthAdjust="spacingAndGlyphs">1.13064</text><rect x="1864" y="143" width="3" height="1" fill="#fff"/><text x="1870" y="148" font-size="12" fill="#fff" textLength="46" lengthAdjust="spacingAndGlyphs">1.13975</text><rect x="1864" y="192" width="3" height="1" fill="#fff"/><text x="1870" y="197" font-size="12" fill="#fff" textLength="46" lengthAdjust="spacingAndGlyphs">1.13855</text><rect x="1864" y="241" width="3" height="1" fill="#fff"/><text x="1870" y="246" font-size="12" fill="#fff" textLength="46" lengthAdjust="spacingAndGlyphs">1.13735</text><rect x="1864" y="290" width="3" height="1" fill="#fff"/><text x="1870" y="295" font-size="12" fill="#fff" textLength="46" lengthAdjust="spacingAndGlyphs">1.13615</text><rect x="1864" y="339" width="3" height="1" fill="#fff"/><text x="1870" y="344" font-size="12" fill="#fff" textLength="46" lengthAdjust="spacingAndGlyphs">1.13495</text><rect x="1864" y="388" width="3" height="1" fill="#fff"/><text x="1870" y="393" font-size="12" fill="#fff" textLength="46" lengthAdjust="spacingAndGlyphs">1.13375</text><rect x="1864" y="437" width="3" height="1" fill="#fff"/><text x="1870" y="442" font-size="12" fill="#fff" textLength="46" lengthAdjust="spacingAndGlyphs">1.13255</text><rect x="1864" y="486" width="3" height="1" fill="#fff"/><text x="1870" y="491" font-size="12" fill="#fff" textLength="46" lengthAdjust="spacingAndGlyphs">1.13135</text><rect x="1864" y="535" width="3" height="1" fill="#fff"/><text x="1870" y="540" font-size="12" fill="#fff" textLength="46" lengthAdjust="spacingAndGlyphs">1.13015</text><rect x="1864" y="584" width="3" height="1" fill="#fff"/><text x="1870" y="589" font-size="12" fill="#fff" textLength="46" lengthAdjust="spacingAndGlyphs">1.12895</text><rect x="1864" y="633" width="3" height="1" fill="#fff"/><text x="1870" y="638" font-size="12" fill="#fff" textLength="46" lengthAdjust="spacingAndGlyphs">1.12775</text><rect x="1865" y="262" width="54" height="14" fill="#00f0f0"/><text x="1870" y="273" font-size="12" fill="#000" textLength="46" lengthAdjust="spacingAndGlyphs">1.13668</text><rect x="1865" y="509" width="54" height="14" fill="#fff"/><text x="1870" y="520" font-size="12" fill="#000" textLength="46" lengthAdjust="spacingAndGlyphs">1.13064</text><rect x="14" y="652" width="1" height="3" fill="#fff"/><text x="13" y="668" font-size="12" fill="#fff" textLength="62.5" lengthAdjust="spacingAndGlyphs">4 Mar 2019</text><rect x="110" y="652" width="1" height="3" fill="#fff"/><text x="109" y="668" font-size="12" fill="#fff" textLength="66.3" lengthAdjust="spacingAndGlyphs">4 Mar 05:00</text><rect x="206" y="652" width="1" height="3" fill="#fff"/><text x="205" y="668" font-size="12" fill="#fff" textLength="66.3" lengthAdjust="spacingAndGlyphs">4 Mar 08:00</text><rect x="302" y="652" width="1" height="3" fill="#fff"/><text x="301" y="668" font-size="12" fill="#fff" textLength="66.3" lengthAdjust="spacingAndGlyphs">4 Mar 11:00</text><rect x="398" y="652" width="1" height="3" fill="#fff"/><text x="397" y="668" font-size="12" fill="#fff" textLength="66.3" lengthAdjust="spacingAndGlyphs">4 Mar 14:00</text><rect x="494" y="652" width="1" height="3" fill="#fff"/><text x="493" y="668" font-size="12" fill="#fff" textLength="66.3" lengthAdjust="spacingAndGlyphs">4 Mar 17:00</text><rect x="590" y="652" width="1" height="3" fill="#fff"/><text x="589" y="668" font-size="12" fill="#fff" textLength="66.3" lengthAdjust="spacingAndGlyphs">4 Mar 20:00</text><rect x="686" y="652" width="1" height="3" fill="#fff"/><text x="685" y="668" font-size="12" fill="#fff" textLength="66.3" lengthAdjust="spacingAndGlyphs">4 Mar 23:00</text><rect x="782" y="652" width="1" height="3" fill="#fff"/><text x="781" y="668" font-size="12" fill="#fff" textLength="66.3" lengthAdjust="spacingAndGlyphs">5 Mar 02:00</text><rect x="878" y="652" width="1" height="3" fill="#fff"/><text x="877" y="668" font-size="12" fill="#fff" textLength="66.3" lengthAdjust="spacingAndGlyphs">5 Mar 05:00</text><rect x="974" y="652" width="1" height="3" fill="#fff"/><text x="973" y="668" font-size="12" fill="#fff" textLength="66.3" lengthAdjust="spacingAndGlyphs">5 Mar 08:00</text><rect x="1070" y="652" width="1" height="3" fill="#fff"/><text x="1069" y="668" font-size="12" fill="#fff" textLength="66.3" lengthAdjust="spacingAndGlyphs">5 Mar 11:00</text><rect x="1166" y="652" width="1" height="3" fill="#fff"/><text x="1165" y="668" font-size="12" fill="#fff" textLength="66.3" lengthAdjust="spacingAndGlyphs">5 Mar 14:00</text><rect x="1262" y="652" width="1" height="3" fill="#fff"/><text x="1261" y="668" font-size="12" fill="#fff" textLength="66.3" lengthAdjust="spacingAndGlyphs">5 Mar 17:00</text><rect x="1358" y="652" width="1" height="3" fill="#fff"/><text x="1357" y="668" font-size="12" fill="#fff" textLength="66.3" lengthAdjust="spacingAndGlyphs">5 Mar 20:00</text><rect x="1454" y="652" width="1" height="3" fill="#fff"/><text x="1453" y="668" font-size="12" fill="#fff" textLength="66.3" lengthAdjust="spacingAndGlyphs">5 Mar 23:00</text></svg>
</body></html>
